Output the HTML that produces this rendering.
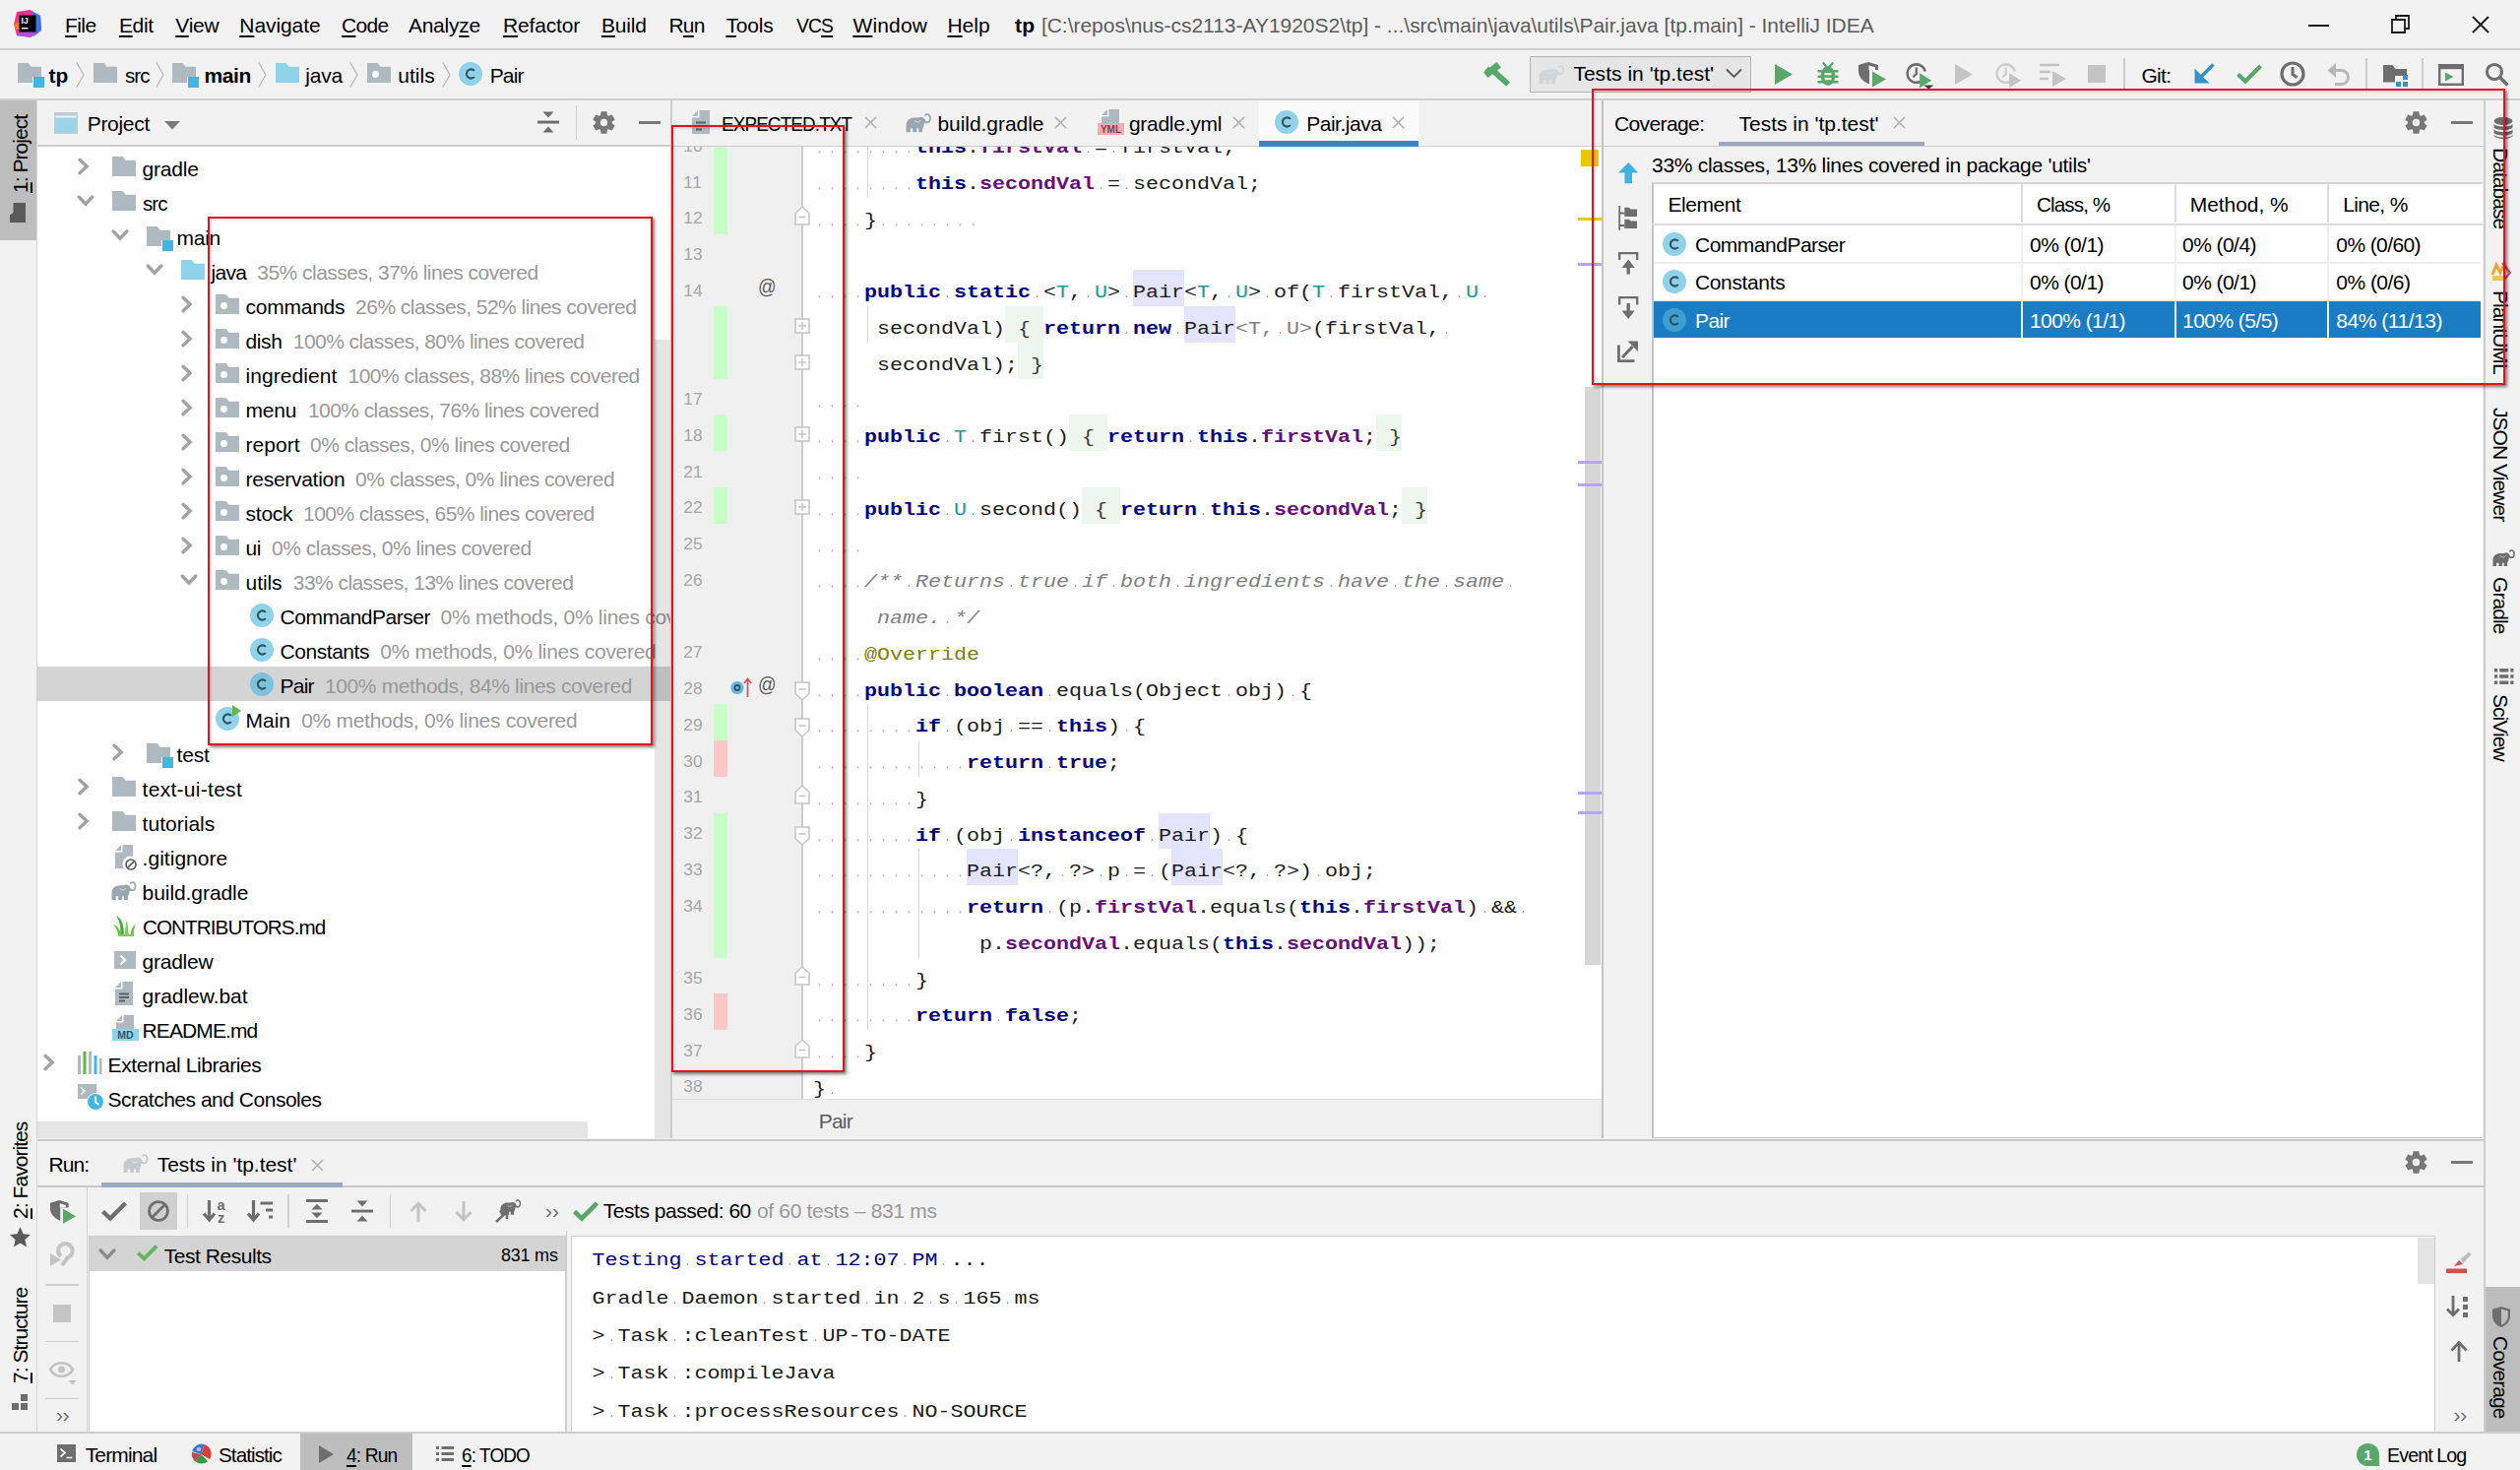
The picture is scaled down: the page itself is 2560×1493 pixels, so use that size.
<!DOCTYPE html>
<html lang="en"><head><meta charset="utf-8"><title>IntelliJ IDEA - Pair.java</title>
<style>

html,body{margin:0;padding:0}
body{width:2560px;height:1493px;position:relative;overflow:hidden;background:#f2f2f2;
 font-family:'Liberation Sans',sans-serif;font-size:20.5px;color:#000}
div,span.t,svg{position:absolute}
svg{overflow:visible}
span.t{white-space:pre}
u{text-decoration:underline;text-decoration-thickness:1.5px;text-underline-offset:2.5px}
.clip{overflow:hidden}
.code{position:absolute;white-space:pre;font-family:'Liberation Mono',monospace;font-size:21.67px;line-height:55px;height:55px;color:#1c1c1c;letter-spacing:0;transform:scaleY(.84);transform-origin:0 0}
.code b{font-weight:700}
.k{color:#000080;font-weight:700}
.f{color:#660e7a;font-weight:700}
.tp{color:#20999d}
.an{color:#808000}
.cm{color:#808080;font-style:italic}
.gy{color:#808080}
.br{color:#3c3c3c}
.w{background:radial-gradient(ellipse 1.25px 1.5px at 6.5px 17.4px,#a3a3a3 0,#a3a3a3 50%,rgba(163,163,163,0) 100%) 0 0/13.002px 100% repeat-x}
.red{border:2px solid #e8111f;box-sizing:border-box;box-shadow:2px 2px 3px rgba(0,0,0,.5),inset 2px 2px 2px rgba(0,0,0,.1)}

</style></head>
<body>
<div style="left:0px;top:49px;width:2560px;height:2px;background:#cfcfcf;"></div>
<svg style="left:14px;top:10px;" width="28" height="28" viewBox="0 0 28 28"><path d="M3 2L16 0L27 6L28 21L17 28L3 26L0 15Z" fill="#fc318c"/><path d="M16 0L27 6L28 21L20 27L22 8Z" fill="#3d6ff2"/><path d="M0 15L5 12L6 20L2 20Z" fill="#fc801d"/><path d="M3 26L17 28L24 22L8 19Z" fill="#b34fd8"/><rect x="5.5" y="5.5" width="17" height="17" fill="#000"/><rect x="8" y="18" width="6.5" height="1.4" fill="#fff"/><text x="7.6" y="14.2" font-family="Liberation Sans,sans-serif" font-size="8.5" font-weight="700" fill="#fff">IJ</text></svg>
<span class="t" style="left:66px;top:11.72px;line-height:27px;color:#000;font-family:'Liberation Sans',sans-serif;font-size:21px;letter-spacing:-0.586px;"><u>F</u>ile</span>
<span class="t" style="left:120.9px;top:11.72px;line-height:27px;color:#000;font-family:'Liberation Sans',sans-serif;font-size:21px;letter-spacing:-0.301px;"><u>E</u>dit</span>
<span class="t" style="left:178.3px;top:11.72px;line-height:27px;color:#000;font-family:'Liberation Sans',sans-serif;font-size:21px;letter-spacing:-0.264px;"><u>V</u>iew</span>
<span class="t" style="left:243.3px;top:11.72px;line-height:27px;color:#000;font-family:'Liberation Sans',sans-serif;font-size:21px;letter-spacing:-0.086px;"><u>N</u>avigate</span>
<span class="t" style="left:346.9px;top:11.72px;line-height:27px;color:#000;font-family:'Liberation Sans',sans-serif;font-size:21px;letter-spacing:-0.630px;"><u>C</u>ode</span>
<span class="t" style="left:414.9px;top:11.72px;line-height:27px;color:#000;font-family:'Liberation Sans',sans-serif;font-size:21px;letter-spacing:-0.231px;">Analy<u>z</u>e</span>
<span class="t" style="left:510.9px;top:11.72px;line-height:27px;color:#000;font-family:'Liberation Sans',sans-serif;font-size:21px;letter-spacing:-0.147px;"><u>R</u>efactor</span>
<span class="t" style="left:611px;top:11.72px;line-height:27px;color:#000;font-family:'Liberation Sans',sans-serif;font-size:21px;letter-spacing:-0.204px;"><u>B</u>uild</span>
<span class="t" style="left:679.5px;top:11.72px;line-height:27px;color:#000;font-family:'Liberation Sans',sans-serif;font-size:21px;letter-spacing:-0.816px;">R<u>u</u>n</span>
<span class="t" style="left:737.4px;top:11.72px;line-height:27px;color:#000;font-family:'Liberation Sans',sans-serif;font-size:21px;letter-spacing:-0.146px;"><u>T</u>ools</span>
<span class="t" style="left:809px;top:11.72px;line-height:27px;color:#000;font-family:'Liberation Sans',sans-serif;font-size:21px;letter-spacing:-0.945px;transform-origin:0 0;transform:scaleX(0.9190);">VC<u>S</u></span>
<span class="t" style="left:866.4px;top:11.72px;line-height:27px;color:#000;font-family:'Liberation Sans',sans-serif;font-size:21px;letter-spacing:0.166px;"><u>W</u>indow</span>
<span class="t" style="left:962.4px;top:11.72px;line-height:27px;color:#000;font-family:'Liberation Sans',sans-serif;font-size:21px;"><u>H</u>elp</span>
<span class="t" style="left:1031px;top:11.72px;line-height:27px;color:#000;font-family:'Liberation Sans',sans-serif;font-size:21px;font-weight:700;letter-spacing:0.236px;">tp</span>
<span class="t" style="left:1057.9px;top:11.72px;line-height:27px;color:#5c5c5c;font-family:'Liberation Sans',sans-serif;font-size:21px;letter-spacing:-0.021px;">[C:\repos\nus-cs2113-AY1920S2\tp] - ...\src\main\java\utils\Pair.java [tp.main] - IntelliJ IDEA</span>
<div style="left:2345px;top:24.5px;width:21px;height:2px;background:#1a1a1a;"></div>
<svg style="left:2429px;top:15px;" width="19" height="19" viewBox="0 0 19 19"><path d="M1 5H14V18H1Z M5 5V1H18V14H14" fill="none" stroke="#1a1a1a" stroke-width="1.8"/></svg>
<svg style="left:2511px;top:16px;" width="18" height="18" viewBox="0 0 18 18"><path d="M1 1L17 17M17 1L1 17" stroke="#1a1a1a" stroke-width="1.9" fill="none"/></svg>
<div style="left:0px;top:100px;width:2560px;height:2px;background:#cfcfcf;"></div>
<svg style="left:17.8px;top:64.2px;" width="27" height="25" viewBox="0 0 27 25"><path d="M0 0H10.6L13.6 3.7H24V14H15V20H0Z" fill="#afb9c0"/><rect x="16" y="14" width="11" height="11" fill="#40b6e0"/></svg>
<span class="t" style="left:49.5px;top:62.52px;line-height:27px;color:#000;font-family:'Liberation Sans',sans-serif;font-size:21px;font-weight:700;letter-spacing:-0.064px;">tp</span>
<svg style="left:77px;top:63px;" width="9" height="26" viewBox="0 0 9 26"><path d="M0.8 0.5L8 13L0.8 25.5" fill="none" stroke="#b9b9b9" stroke-width="1.3"/></svg>
<svg style="left:94.7px;top:64.2px;" width="24" height="20" viewBox="0 0 24 20"><path d="M0 0H10.6L13.6 3.7H24V20H0Z" fill="#afb9c0"/></svg>
<span class="t" style="left:126.7px;top:62.52px;line-height:27px;color:#000;font-family:'Liberation Sans',sans-serif;font-size:21px;letter-spacing:-0.945px;transform-origin:0 0;transform:scaleX(0.9775);">src</span>
<svg style="left:158px;top:63px;" width="9" height="26" viewBox="0 0 9 26"><path d="M0.8 0.5L8 13L0.8 25.5" fill="none" stroke="#b9b9b9" stroke-width="1.3"/></svg>
<svg style="left:174.7px;top:64.2px;" width="27" height="25" viewBox="0 0 27 25"><path d="M0 0H10.6L13.6 3.7H24V14H15V20H0Z" fill="#afb9c0"/><rect x="16" y="14" width="11" height="11" fill="#40b6e0"/></svg>
<span class="t" style="left:207.5px;top:62.52px;line-height:27px;color:#000;font-family:'Liberation Sans',sans-serif;font-size:21px;font-weight:700;letter-spacing:-0.379px;">main</span>
<svg style="left:262px;top:63px;" width="9" height="26" viewBox="0 0 9 26"><path d="M0.8 0.5L8 13L0.8 25.5" fill="none" stroke="#b9b9b9" stroke-width="1.3"/></svg>
<svg style="left:279.7px;top:64.2px;" width="24" height="20" viewBox="0 0 24 20"><path d="M0 0H10.6L13.6 3.7H24V20H0Z" fill="#8fd3ea"/></svg>
<span class="t" style="left:310.3px;top:62.52px;line-height:27px;color:#000;font-family:'Liberation Sans',sans-serif;font-size:21px;letter-spacing:-0.208px;">java</span>
<svg style="left:355px;top:63px;" width="9" height="26" viewBox="0 0 9 26"><path d="M0.8 0.5L8 13L0.8 25.5" fill="none" stroke="#b9b9b9" stroke-width="1.3"/></svg>
<svg style="left:372.8px;top:64.2px;" width="24" height="20" viewBox="0 0 24 20"><path d="M0 0H10.6L13.6 3.7H24V20H0Z" fill="#afb9c0"/><circle cx="8.5" cy="11.5" r="3.4" fill="#fff"/></svg>
<span class="t" style="left:404.3px;top:62.52px;line-height:27px;color:#000;font-family:'Liberation Sans',sans-serif;font-size:21px;letter-spacing:0.028px;">utils</span>
<svg style="left:449px;top:63px;" width="9" height="26" viewBox="0 0 9 26"><path d="M0.8 0.5L8 13L0.8 25.5" fill="none" stroke="#b9b9b9" stroke-width="1.3"/></svg>
<svg style="left:465.7px;top:63px;" width="24" height="24" viewBox="0 0 24 24"><circle cx="12" cy="12" r="12" fill="#8fd3ea"/><path d="M15.9 8.9A4.6 4.6 0 1 0 15.9 15.1" fill="none" stroke="#36505c" stroke-width="2.1"/></svg>
<span class="t" style="left:497.7px;top:62.52px;line-height:27px;color:#000;font-family:'Liberation Sans',sans-serif;font-size:21px;letter-spacing:-0.840px;">Pair</span>
<svg style="left:1506.5px;top:62.5px;" width="27" height="25" viewBox="0 0 27 25"><g fill="#59a869"><rect x="-8.5" y="-3.6" width="17" height="7.2" transform="translate(9 8) rotate(-38)"/><path d="M0.8 9.5L5 4.5L8 8Z"/><rect x="0" y="-2.9" width="21" height="5.8" transform="translate(9.5 8.5) rotate(42)"/></g></svg>
<div style="left:1554px;top:57px;width:225px;height:37px;background:#e6e6e6;border:1.5px solid #b4b4b4;box-sizing:border-box;"></div>
<svg style="left:1563px;top:65.5px;" width="26.4" height="19.2" viewBox="0 0 24 17.5"><path d="M0.5 17.5V11C0.5 6.5 4 4 8.5 4H12C13.5 3 15.5 3.2 16.8 4.3C18.3 5.6 18.6 7.8 19.8 7.8C21.2 7.8 22 6.3 22 4.6C22 3 21 1.9 19.8 1.9C19.2 1.9 18.7 2.3 18.6 2.8L17.3 2.2C17.7 1 18.8 0.3 20 0.3C22 0.3 23.6 2.2 23.6 4.6C23.6 7.4 22 9.6 19.6 9.6C18.6 9.6 17.8 9.2 17.2 8.6C17.2 11.5 16.4 13.2 15.6 13.8V17.5H12V14.2H10.2V17.5H6.6V14.2H4.3V17.5Z" fill="#d2d6d9"/><path d="M8.2 6.3C9.4 8.6 12.2 8.8 14 6.6" fill="none" stroke="#e6e6e6" stroke-width="0.9" opacity=".75"/></svg>
<span class="t" style="left:1598.4px;top:60.92px;line-height:27px;color:#000;font-family:'Liberation Sans',sans-serif;font-size:21px;letter-spacing:0.025px;">Tests in 'tp.test'</span>
<svg style="left:1753px;top:69px;" width="17" height="11" viewBox="0 0 17 11"><path d="M1 1.5L8.5 9L16 1.5" fill="none" stroke="#555" stroke-width="1.8"/></svg>
<svg style="left:1803.0px;top:64.7px;" width="18" height="21" viewBox="0 0 18 21"><path d="M0 0L18 10.5L0 21Z" fill="#59a869"/></svg>
<svg style="left:1846.0px;top:62.9px;" width="22" height="24" viewBox="0 0 22 24"><path d="M5.8 0.6L9.6 5M16.2 0.6L12.4 5" stroke="#59a869" stroke-width="2.3" fill="none"/><ellipse cx="11" cy="14" rx="7.3" ry="10" fill="#59a869"/><path d="M0.5 9.2H21.5M0.5 14.7H21.5M0.5 20.2H21.5" stroke="#59a869" stroke-width="2.4" fill="none"/><rect x="7.6" y="11" width="6.8" height="2.3" fill="#f2f2f2"/><rect x="7.6" y="15.9" width="6.8" height="2.3" fill="#f2f2f2"/></svg>
<svg style="left:1888px;top:62.5px;" width="28" height="26" viewBox="0 0 28 26"><path d="M0 3L10 0L20 3V8H11V22.5C4 19.5 0 15 0 9Z" fill="#6e6e6e"/><path d="M10 3.2V20C6 17.5 3 14 3 9V5.2Z" fill="#f2f2f2" opacity="0"/><path d="M10.5 3.5L17 5.3V8H10.5Z" fill="#f2f2f2"/><path d="M14 9.5L28 17.5L14 25.5Z" fill="#59a869"/></svg>
<svg style="left:1934.5px;top:61.5px;" width="31" height="30" viewBox="0 0 31 30"><path d="M15.5 21A9.2 9.2 0 1 1 20.7 10.5" fill="none" stroke="#6e6e6e" stroke-width="2.5"/><path d="M11.8 6.5V13L8.3 16.3" fill="none" stroke="#6e6e6e" stroke-width="2.3"/><path d="M15.1 12.3L27.2 19.7L15.1 27.2Z" fill="#59a869"/><path d="M19.3 24.4H29.3L24.3 28.6Z" fill="#3c3c3c"/></svg>
<svg style="left:1986.0px;top:64.7px;" width="18" height="21" viewBox="0 0 18 21"><path d="M0 0L18 10.5L0 21Z" fill="#c4c4c4"/></svg>
<svg style="left:2026px;top:61.5px;" width="31" height="30" viewBox="0 0 31 30"><path d="M15.5 21A9.2 9.2 0 1 1 20.7 10.5" fill="none" stroke="#cdcdcd" stroke-width="2.5"/><path d="M11.8 6.5V13L8.3 16.3" fill="none" stroke="#cdcdcd" stroke-width="2.3"/><path d="M15.1 12.3L27.2 19.7L15.1 27.2Z" fill="#c4c4c4"/></svg>
<svg style="left:2072px;top:64px;" width="27" height="24" viewBox="0 0 27 24"><path d="M0 2H20M0 9H11M0 16H9" stroke="#c4c4c4" stroke-width="2.6"/><path d="M13 8L27 16L13 24Z" fill="#c4c4c4"/></svg>
<svg style="left:2121.0px;top:66.0px;" width="18" height="18" viewBox="0 0 18 18"><rect width="18" height="18" fill="#c4c4c4"/></svg>
<div style="left:2157px;top:59px;width:1.5px;height:33px;background:#cdcdcd;"></div>
<span class="t" style="left:2175.4px;top:62.52px;line-height:27px;color:#000;font-family:'Liberation Sans',sans-serif;font-size:21px;letter-spacing:-0.693px;">Git:</span>
<svg style="left:2227.5px;top:63.5px;" width="22" height="22" viewBox="0 0 22 22"><path d="M20.5 1.5L7 15" fill="none" stroke="#3592c4" stroke-width="3.4"/><path d="M1.5 5.5V20.5H16.5Z" fill="#3592c4"/></svg>
<svg style="left:2271.5px;top:64.5px;" width="26" height="20" viewBox="0 0 26 20"><path d="M1.5 10.5L9 17.5L24.5 2" fill="none" stroke="#59a869" stroke-width="4.2"/></svg>
<svg style="left:2315.7px;top:62.0px;" width="26" height="26" viewBox="0 0 26 26"><circle cx="13" cy="13" r="11" fill="none" stroke="#6e6e6e" stroke-width="3.2"/><path d="M13 6V13.5L17.5 16.8" fill="none" stroke="#6e6e6e" stroke-width="3"/></svg>
<svg style="left:2364.0px;top:62.5px;" width="23" height="24" viewBox="0 0 23 24"><path d="M7 8.5H14.5A7 7 0 0 1 14.5 22.5H8" fill="none" stroke="#b8b8b8" stroke-width="3"/><path d="M9 1V16L0.5 8.5Z" fill="#b8b8b8"/></svg>
<div style="left:2403px;top:59px;width:1.5px;height:33px;background:#cdcdcd;"></div>
<svg style="left:2420.5px;top:65.5px;" width="26" height="23" viewBox="0 0 26 23"><path d="M0 0H9.5L12.5 4H24V11H12V17.5H0Z" fill="#6e6e6e"/><rect x="20" y="10" width="5" height="5" fill="#3592c4"/><rect x="13" y="17" width="5" height="5" fill="#3592c4"/><rect x="20" y="17" width="5" height="5" fill="#3592c4"/></svg>
<div style="left:2460px;top:59px;width:1.5px;height:33px;background:#cdcdcd;"></div>
<svg style="left:2476.5px;top:64.5px;" width="26" height="22" viewBox="0 0 26 22"><rect x="1.2" y="1.2" width="23.6" height="19.6" fill="none" stroke="#6e6e6e" stroke-width="2.4"/><rect x="1.2" y="1.2" width="23.6" height="4" fill="#6e6e6e"/><path d="M7 8.5L15.5 13L7 17.5Z" fill="#59a869"/></svg>
<svg style="left:2524.0px;top:63.0px;" width="25" height="25" viewBox="0 0 25 25"><circle cx="10" cy="10" r="7.6" fill="none" stroke="#6e6e6e" stroke-width="3"/><path d="M15.5 15.5L23.5 23.5" stroke="#6e6e6e" stroke-width="3.6"/></svg>
<div style="left:1629px;top:102px;width:894px;height:1054px;background:#f2f2f2;"></div>
<div style="left:1629px;top:147.5px;width:894px;height:1.5px;background:#cdcdcd;"></div>
<span class="t" style="left:1640px;top:111.52px;line-height:27px;color:#000;font-family:'Liberation Sans',sans-serif;font-size:21px;letter-spacing:-0.610px;">Coverage:</span>
<span class="t" style="left:1766.5px;top:111.52px;line-height:27px;color:#000;font-family:'Liberation Sans',sans-serif;font-size:21px;letter-spacing:-0.008px;">Tests in 'tp.test'</span>
<svg style="left:1922.5px;top:118.0px;" width="13" height="13" viewBox="0 0 13 13"><path d="M1 1L12 12M12 1L1 12" stroke="#b0b0b0" stroke-width="1.6" fill="none"/></svg>
<div style="left:1745.5px;top:144.3px;width:209.5px;height:4px;background:#9ca8c1;"></div>
<svg style="left:2443.3px;top:112.8px;" width="23" height="23" viewBox="0 0 23 23"><path d="M8.6 0.3H14.4L15.3 6H7.7Z" transform="rotate(0 11.5 11.5)" fill="#787878"/><path d="M8.6 0.3H14.4L15.3 6H7.7Z" transform="rotate(60 11.5 11.5)" fill="#787878"/><path d="M8.6 0.3H14.4L15.3 6H7.7Z" transform="rotate(120 11.5 11.5)" fill="#787878"/><path d="M8.6 0.3H14.4L15.3 6H7.7Z" transform="rotate(180 11.5 11.5)" fill="#787878"/><path d="M8.6 0.3H14.4L15.3 6H7.7Z" transform="rotate(240 11.5 11.5)" fill="#787878"/><path d="M8.6 0.3H14.4L15.3 6H7.7Z" transform="rotate(300 11.5 11.5)" fill="#787878"/><circle cx="11.5" cy="11.5" r="6" fill="none" stroke="#787878" stroke-width="4.6"/></svg>
<svg style="left:2490.0px;top:123.0px;" width="22" height="3" viewBox="0 0 22 3"><rect width="22" height="3" fill="#787878"/></svg>
<span class="t" style="left:1678px;top:153.52px;line-height:27px;color:#000;font-family:'Liberation Sans',sans-serif;font-size:21px;letter-spacing:-0.285px;">33% classes, 13% lines covered in package 'utils'</span>
<svg style="left:1643.8px;top:164.5px;" width="20.4" height="21.2" viewBox="0 0 20.4 21.2"><path d="M10.2 0L20.4 10.6H14V21.2H6.4V10.6H0Z" fill="#3fb4e0"/></svg>
<svg style="left:1643.5px;top:208.5px;" width="20" height="25" viewBox="0 0 20 25"><path d="M1.2 0V24.8M1.2 7.5H6.5M1.2 20H6.5" fill="none" stroke="#6e6e6e" stroke-width="1.8"/><path d="M6.3 1.8H11L12.5 3.6H19V11H6.3Z" fill="#6e6e6e"/><path d="M6.3 13.8H11L12.5 15.6H19V23H6.3Z" fill="#6e6e6e"/></svg>
<svg style="left:1643.8px;top:255.5px;" width="20.4" height="23" viewBox="0 0 20.4 23"><path d="M1.2 8V1.2H19.2V8" fill="none" stroke="#6e6e6e" stroke-width="2.3"/><path d="M10.2 22.5V14" fill="none" stroke="#6e6e6e" stroke-width="3.4"/><path d="M3.6 16L10.2 7.5L16.8 16Z" fill="#6e6e6e"/></svg>
<svg style="left:1643.8px;top:301px;" width="20.4" height="23.5" viewBox="0 0 20.4 23.5"><path d="M1.2 8.5V1.2H19.2V8.5" fill="none" stroke="#6e6e6e" stroke-width="2.3"/><path d="M10.2 7V16" fill="none" stroke="#6e6e6e" stroke-width="3.4"/><path d="M3.6 14.5L10.2 23L16.8 14.5Z" fill="#6e6e6e"/></svg>
<svg style="left:1643.3px;top:346px;" width="21" height="22" viewBox="0 0 21 22"><path d="M1.4 4.5V20.6H17.5" fill="none" stroke="#6e6e6e" stroke-width="2.8"/><path d="M5 17L15.5 6" fill="none" stroke="#6e6e6e" stroke-width="3.2"/><path d="M10.5 0.5H21V11Z" fill="#6e6e6e"/></svg>
<div style="left:1678px;top:185px;width:844px;height:970px;background:#fff;"></div>
<div style="left:1678px;top:1155px;width:844px;height:1.2px;background:#c4c4c4;"></div>
<div style="left:1678px;top:185px;width:1.8px;height:971px;background:#c4c4c4;"></div>
<div style="left:1678px;top:185px;width:844px;height:1.5px;background:#d4d4d4;"></div>
<div style="left:1678px;top:227px;width:844px;height:2px;background:#dadada;"></div>
<div style="left:2053px;top:187px;width:2px;height:39px;background:#dcdcdc;"></div>
<div style="left:2053px;top:229px;width:2px;height:114px;background:#efefef;"></div>
<div style="left:2209px;top:187px;width:2px;height:39px;background:#dcdcdc;"></div>
<div style="left:2209px;top:229px;width:2px;height:114px;background:#efefef;"></div>
<div style="left:2364px;top:187px;width:2px;height:39px;background:#dcdcdc;"></div>
<div style="left:2364px;top:229px;width:2px;height:114px;background:#efefef;"></div>
<div style="left:1680px;top:266px;width:840px;height:1.5px;background:#efefef;"></div>
<div style="left:1680px;top:304.5px;width:840px;height:1.5px;background:#efefef;"></div>
<span class="t" style="left:1694.5px;top:194.02px;line-height:27px;color:#000;font-family:'Liberation Sans',sans-serif;font-size:21px;letter-spacing:-0.450px;">Element</span>
<span class="t" style="left:2069.3px;top:194.02px;line-height:27px;color:#000;font-family:'Liberation Sans',sans-serif;font-size:21px;letter-spacing:-0.945px;transform-origin:0 0;transform:scaleX(0.9867);">Class, %</span>
<span class="t" style="left:2224.8px;top:194.02px;line-height:27px;color:#000;font-family:'Liberation Sans',sans-serif;font-size:21px;letter-spacing:-0.066px;">Method, %</span>
<span class="t" style="left:2380.2px;top:194.02px;line-height:27px;color:#000;font-family:'Liberation Sans',sans-serif;font-size:21px;letter-spacing:-0.650px;">Line, %</span>
<div style="left:1679.8px;top:306px;width:373.20000000000005px;height:36.5px;background:#1a7dc4;"></div>
<div style="left:2055px;top:306px;width:154px;height:36.5px;background:#1a7dc4;"></div>
<div style="left:2211px;top:306px;width:153px;height:36.5px;background:#1a7dc4;"></div>
<div style="left:2366px;top:306px;width:154px;height:36.5px;background:#1a7dc4;"></div>
<svg style="left:1688.8px;top:236.0px;" width="24" height="24" viewBox="0 0 24 24"><circle cx="12" cy="12" r="12" fill="#8fd3ea"/><path d="M15.9 8.9A4.6 4.6 0 1 0 15.9 15.1" fill="none" stroke="#36505c" stroke-width="2.1"/></svg>
<span class="t" style="left:1722px;top:234.82px;line-height:27px;color:#000;font-family:'Liberation Sans',sans-serif;font-size:21px;letter-spacing:-0.495px;">CommandParser</span>
<span class="t" style="left:2062px;top:234.82px;line-height:27px;color:#000;font-family:'Liberation Sans',sans-serif;font-size:21px;letter-spacing:-0.547px;">0% (0/1)</span>
<span class="t" style="left:2217px;top:234.82px;line-height:27px;color:#000;font-family:'Liberation Sans',sans-serif;font-size:21px;letter-spacing:-0.547px;">0% (0/4)</span>
<span class="t" style="left:2373.3px;top:234.82px;line-height:27px;color:#000;font-family:'Liberation Sans',sans-serif;font-size:21px;letter-spacing:-0.594px;">0% (0/60)</span>
<svg style="left:1688.8px;top:274.2px;" width="24" height="24" viewBox="0 0 24 24"><circle cx="12" cy="12" r="12" fill="#8fd3ea"/><path d="M15.9 8.9A4.6 4.6 0 1 0 15.9 15.1" fill="none" stroke="#36505c" stroke-width="2.1"/></svg>
<span class="t" style="left:1722px;top:273.02px;line-height:27px;color:#000;font-family:'Liberation Sans',sans-serif;font-size:21px;letter-spacing:-0.363px;">Constants</span>
<span class="t" style="left:2062px;top:273.02px;line-height:27px;color:#000;font-family:'Liberation Sans',sans-serif;font-size:21px;letter-spacing:-0.547px;">0% (0/1)</span>
<span class="t" style="left:2217px;top:273.02px;line-height:27px;color:#000;font-family:'Liberation Sans',sans-serif;font-size:21px;letter-spacing:-0.547px;">0% (0/1)</span>
<span class="t" style="left:2373.3px;top:273.02px;line-height:27px;color:#000;font-family:'Liberation Sans',sans-serif;font-size:21px;letter-spacing:-0.534px;">0% (0/6)</span>
<svg style="left:1688.8px;top:312.79999999999995px;" width="24" height="24" viewBox="0 0 24 24"><circle cx="12" cy="12" r="12" fill="#3f9fd2"/><path d="M15.9 8.9A4.6 4.6 0 1 0 15.9 15.1" fill="none" stroke="#36505c" stroke-width="2.1"/></svg>
<span class="t" style="left:1722px;top:311.62px;line-height:27px;color:#fff;font-family:'Liberation Sans',sans-serif;font-size:21px;letter-spacing:-0.590px;">Pair</span>
<span class="t" style="left:2062px;top:311.62px;line-height:27px;color:#fff;font-family:'Liberation Sans',sans-serif;font-size:21px;letter-spacing:-0.573px;">100% (1/1)</span>
<span class="t" style="left:2217px;top:311.62px;line-height:27px;color:#fff;font-family:'Liberation Sans',sans-serif;font-size:21px;letter-spacing:-0.543px;">100% (5/5)</span>
<span class="t" style="left:2373.3px;top:311.62px;line-height:27px;color:#fff;font-family:'Liberation Sans',sans-serif;font-size:21px;letter-spacing:-0.469px;">84% (11/13)</span>
<div style="left:38px;top:102px;width:644px;height:46px;background:#f2f2f2;"></div>
<div style="left:38px;top:147px;width:644px;height:2px;background:#cdcdcd;"></div>
<svg style="left:55px;top:113.5px;" width="24" height="22" viewBox="0 0 24 22"><rect x="0.75" y="0.75" width="22.5" height="20.5" fill="#9ad5ea" stroke="#c3ccd2" stroke-width="1.5"/><rect x="0" y="0" width="24" height="3.5" fill="#c3ccd2"/><rect x="1.5" y="3.5" width="21" height="2" fill="#f2f2f2"/></svg>
<span class="t" style="left:88.7px;top:111.52px;line-height:27px;color:#000;font-family:'Liberation Sans',sans-serif;font-size:21px;letter-spacing:-0.294px;">Project</span>
<svg style="left:167px;top:123px;" width="16" height="8.5" viewBox="0 0 16 8.5"><path d="M0 0H16L8 8.5Z" fill="#7a7a7a"/></svg>
<svg style="left:545.7px;top:113.3px;" width="22" height="22" viewBox="0 0 22 22"><rect x="0" y="9.6" width="22" height="2.9" fill="#6e6e6e"/><path d="M5.5 0.5H16.5L11 6.5Z" fill="#6e6e6e"/><path d="M5.5 21.5H16.5L11 15.5Z" fill="#6e6e6e"/></svg>
<div style="left:584.5px;top:107px;width:1.5px;height:35px;background:#d0d0d0;"></div>
<svg style="left:602.3px;top:112.8px;" width="23" height="23" viewBox="0 0 23 23"><path d="M8.6 0.3H14.4L15.3 6H7.7Z" transform="rotate(0 11.5 11.5)" fill="#787878"/><path d="M8.6 0.3H14.4L15.3 6H7.7Z" transform="rotate(60 11.5 11.5)" fill="#787878"/><path d="M8.6 0.3H14.4L15.3 6H7.7Z" transform="rotate(120 11.5 11.5)" fill="#787878"/><path d="M8.6 0.3H14.4L15.3 6H7.7Z" transform="rotate(180 11.5 11.5)" fill="#787878"/><path d="M8.6 0.3H14.4L15.3 6H7.7Z" transform="rotate(240 11.5 11.5)" fill="#787878"/><path d="M8.6 0.3H14.4L15.3 6H7.7Z" transform="rotate(300 11.5 11.5)" fill="#787878"/><circle cx="11.5" cy="11.5" r="6" fill="none" stroke="#787878" stroke-width="4.6"/></svg>
<svg style="left:649.0px;top:123.0px;" width="22" height="3" viewBox="0 0 22 3"><rect width="22" height="3" fill="#787878"/></svg>
<div style="left:38px;top:149px;width:644px;height:1007px;background:#fff;"></div>
<div class="clip" style="left:38px;top:149px;width:643.5px;height:1007px">
<svg style="left:41.1px;top:11.0px;" width="12" height="18" viewBox="0 0 12 18"><path d="M2 2.2L9.2 9L2 15.8" fill="none" stroke="#a3a3a3" stroke-width="3.4" stroke-linecap="round" stroke-linejoin="miter"/></svg>
<svg style="left:76.0px;top:10px;" width="24" height="20" viewBox="0 0 24 20"><path d="M0 0H10.6L13.6 3.7H24V20H0Z" fill="#afb9c0"/></svg>
<span class="t" style="left:106.6px;top:8.92px;line-height:27px;color:#000;font-family:'Liberation Sans',sans-serif;font-size:21px;letter-spacing:-0.232px;">gradle</span>
<svg style="left:40.1px;top:49.2px;" width="18" height="12" viewBox="0 0 18 12"><path d="M2.2 2L9 9.2L15.8 2" fill="none" stroke="#a3a3a3" stroke-width="3.4" stroke-linecap="round" stroke-linejoin="miter"/></svg>
<svg style="left:76.0px;top:45px;" width="24" height="20" viewBox="0 0 24 20"><path d="M0 0H10.6L13.6 3.7H24V20H0Z" fill="#afb9c0"/></svg>
<span class="t" style="left:106.6px;top:43.92px;line-height:27px;color:#000;font-family:'Liberation Sans',sans-serif;font-size:21px;letter-spacing:-0.945px;transform-origin:0 0;transform:scaleX(0.9775);">src</span>
<svg style="left:75.1px;top:84.2px;" width="18" height="12" viewBox="0 0 18 12"><path d="M2.2 2L9 9.2L15.8 2" fill="none" stroke="#a3a3a3" stroke-width="3.4" stroke-linecap="round" stroke-linejoin="miter"/></svg>
<svg style="left:110.8px;top:80.5px;" width="27" height="25" viewBox="0 0 27 25"><path d="M0 0H10.6L13.6 3.7H24V14H15V20H0Z" fill="#afb9c0"/><rect x="16" y="14" width="11" height="11" fill="#40b6e0"/></svg>
<span class="t" style="left:141.6px;top:78.92px;line-height:27px;color:#000;font-family:'Liberation Sans',sans-serif;font-size:21px;letter-spacing:-0.283px;">main</span>
<svg style="left:110.1px;top:119.2px;" width="18" height="12" viewBox="0 0 18 12"><path d="M2.2 2L9 9.2L15.8 2" fill="none" stroke="#a3a3a3" stroke-width="3.4" stroke-linecap="round" stroke-linejoin="miter"/></svg>
<svg style="left:146.0px;top:115px;" width="24" height="20" viewBox="0 0 24 20"><path d="M0 0H10.6L13.6 3.7H24V20H0Z" fill="#8fd3ea"/></svg>
<span class="t" style="left:176.6px;top:113.92px;line-height:27px;color:#000;font-family:'Liberation Sans',sans-serif;font-size:21px;letter-spacing:-0.758px;">java</span>
<span class="t" style="left:223.3px;top:113.92px;line-height:27px;color:#999999;font-family:'Liberation Sans',sans-serif;font-size:21px;letter-spacing:-0.529px;">35% classes, 37% lines covered</span>
<svg style="left:146.1px;top:151.0px;" width="12" height="18" viewBox="0 0 12 18"><path d="M2 2.2L9.2 9L2 15.8" fill="none" stroke="#a3a3a3" stroke-width="3.4" stroke-linecap="round" stroke-linejoin="miter"/></svg>
<svg style="left:181.0px;top:150px;" width="24" height="20" viewBox="0 0 24 20"><path d="M0 0H10.6L13.6 3.7H24V20H0Z" fill="#afb9c0"/><circle cx="8.5" cy="11.5" r="3.4" fill="#fff"/></svg>
<span class="t" style="left:211.6px;top:148.92px;line-height:27px;color:#000;font-family:'Liberation Sans',sans-serif;font-size:21px;letter-spacing:-0.250px;">commands</span>
<span class="t" style="left:323.1px;top:148.92px;line-height:27px;color:#999999;font-family:'Liberation Sans',sans-serif;font-size:21px;letter-spacing:-0.529px;">26% classes, 52% lines covered</span>
<svg style="left:146.1px;top:186.0px;" width="12" height="18" viewBox="0 0 12 18"><path d="M2 2.2L9.2 9L2 15.8" fill="none" stroke="#a3a3a3" stroke-width="3.4" stroke-linecap="round" stroke-linejoin="miter"/></svg>
<svg style="left:181.0px;top:185px;" width="24" height="20" viewBox="0 0 24 20"><path d="M0 0H10.6L13.6 3.7H24V20H0Z" fill="#afb9c0"/><circle cx="8.5" cy="11.5" r="3.4" fill="#fff"/></svg>
<span class="t" style="left:211.6px;top:183.92px;line-height:27px;color:#000;font-family:'Liberation Sans',sans-serif;font-size:21px;letter-spacing:-0.433px;">dish</span>
<span class="t" style="left:259.8px;top:183.92px;line-height:27px;color:#999999;font-family:'Liberation Sans',sans-serif;font-size:21px;letter-spacing:-0.556px;">100% classes, 80% lines covered</span>
<svg style="left:146.1px;top:221.0px;" width="12" height="18" viewBox="0 0 12 18"><path d="M2 2.2L9.2 9L2 15.8" fill="none" stroke="#a3a3a3" stroke-width="3.4" stroke-linecap="round" stroke-linejoin="miter"/></svg>
<svg style="left:181.0px;top:220px;" width="24" height="20" viewBox="0 0 24 20"><path d="M0 0H10.6L13.6 3.7H24V20H0Z" fill="#afb9c0"/><circle cx="8.5" cy="11.5" r="3.4" fill="#fff"/></svg>
<span class="t" style="left:211.6px;top:218.92px;line-height:27px;color:#000;font-family:'Liberation Sans',sans-serif;font-size:21px;letter-spacing:0.057px;">ingredient</span>
<span class="t" style="left:315.6px;top:218.92px;line-height:27px;color:#999999;font-family:'Liberation Sans',sans-serif;font-size:21px;letter-spacing:-0.540px;">100% classes, 88% lines covered</span>
<svg style="left:146.1px;top:256.0px;" width="12" height="18" viewBox="0 0 12 18"><path d="M2 2.2L9.2 9L2 15.8" fill="none" stroke="#a3a3a3" stroke-width="3.4" stroke-linecap="round" stroke-linejoin="miter"/></svg>
<svg style="left:181.0px;top:255px;" width="24" height="20" viewBox="0 0 24 20"><path d="M0 0H10.6L13.6 3.7H24V20H0Z" fill="#afb9c0"/><circle cx="8.5" cy="11.5" r="3.4" fill="#fff"/></svg>
<span class="t" style="left:211.6px;top:253.92px;line-height:27px;color:#000;font-family:'Liberation Sans',sans-serif;font-size:21px;letter-spacing:-0.233px;">menu</span>
<span class="t" style="left:274.9px;top:253.92px;line-height:27px;color:#999999;font-family:'Liberation Sans',sans-serif;font-size:21px;letter-spacing:-0.556px;">100% classes, 76% lines covered</span>
<svg style="left:146.1px;top:291.0px;" width="12" height="18" viewBox="0 0 12 18"><path d="M2 2.2L9.2 9L2 15.8" fill="none" stroke="#a3a3a3" stroke-width="3.4" stroke-linecap="round" stroke-linejoin="miter"/></svg>
<svg style="left:181.0px;top:290px;" width="24" height="20" viewBox="0 0 24 20"><path d="M0 0H10.6L13.6 3.7H24V20H0Z" fill="#afb9c0"/><circle cx="8.5" cy="11.5" r="3.4" fill="#fff"/></svg>
<span class="t" style="left:211.6px;top:288.92px;line-height:27px;color:#000;font-family:'Liberation Sans',sans-serif;font-size:21px;letter-spacing:0.007px;">report</span>
<span class="t" style="left:277.1px;top:288.92px;line-height:27px;color:#999999;font-family:'Liberation Sans',sans-serif;font-size:21px;letter-spacing:-0.511px;">0% classes, 0% lines covered</span>
<svg style="left:146.1px;top:326.0px;" width="12" height="18" viewBox="0 0 12 18"><path d="M2 2.2L9.2 9L2 15.8" fill="none" stroke="#a3a3a3" stroke-width="3.4" stroke-linecap="round" stroke-linejoin="miter"/></svg>
<svg style="left:181.0px;top:325px;" width="24" height="20" viewBox="0 0 24 20"><path d="M0 0H10.6L13.6 3.7H24V20H0Z" fill="#afb9c0"/><circle cx="8.5" cy="11.5" r="3.4" fill="#fff"/></svg>
<span class="t" style="left:211.6px;top:323.92px;line-height:27px;color:#000;font-family:'Liberation Sans',sans-serif;font-size:21px;letter-spacing:-0.290px;">reservation</span>
<span class="t" style="left:323.1px;top:323.92px;line-height:27px;color:#999999;font-family:'Liberation Sans',sans-serif;font-size:21px;letter-spacing:-0.529px;">0% classes, 0% lines covered</span>
<svg style="left:146.1px;top:361.0px;" width="12" height="18" viewBox="0 0 12 18"><path d="M2 2.2L9.2 9L2 15.8" fill="none" stroke="#a3a3a3" stroke-width="3.4" stroke-linecap="round" stroke-linejoin="miter"/></svg>
<svg style="left:181.0px;top:360px;" width="24" height="20" viewBox="0 0 24 20"><path d="M0 0H10.6L13.6 3.7H24V20H0Z" fill="#afb9c0"/><circle cx="8.5" cy="11.5" r="3.4" fill="#fff"/></svg>
<span class="t" style="left:211.6px;top:358.92px;line-height:27px;color:#000;font-family:'Liberation Sans',sans-serif;font-size:21px;letter-spacing:-0.263px;">stock</span>
<span class="t" style="left:270.1px;top:358.92px;line-height:27px;color:#999999;font-family:'Liberation Sans',sans-serif;font-size:21px;letter-spacing:-0.556px;">100% classes, 65% lines covered</span>
<svg style="left:146.1px;top:396.0px;" width="12" height="18" viewBox="0 0 12 18"><path d="M2 2.2L9.2 9L2 15.8" fill="none" stroke="#a3a3a3" stroke-width="3.4" stroke-linecap="round" stroke-linejoin="miter"/></svg>
<svg style="left:181.0px;top:395px;" width="24" height="20" viewBox="0 0 24 20"><path d="M0 0H10.6L13.6 3.7H24V20H0Z" fill="#afb9c0"/><circle cx="8.5" cy="11.5" r="3.4" fill="#fff"/></svg>
<span class="t" style="left:211.6px;top:393.92px;line-height:27px;color:#000;font-family:'Liberation Sans',sans-serif;font-size:21px;letter-spacing:-0.530px;">ui</span>
<span class="t" style="left:238.10000000000002px;top:393.92px;line-height:27px;color:#999999;font-family:'Liberation Sans',sans-serif;font-size:21px;letter-spacing:-0.511px;">0% classes, 0% lines covered</span>
<svg style="left:145.1px;top:434.2px;" width="18" height="12" viewBox="0 0 18 12"><path d="M2.2 2L9 9.2L15.8 2" fill="none" stroke="#a3a3a3" stroke-width="3.4" stroke-linecap="round" stroke-linejoin="miter"/></svg>
<svg style="left:181.0px;top:430px;" width="24" height="20" viewBox="0 0 24 20"><path d="M0 0H10.6L13.6 3.7H24V20H0Z" fill="#afb9c0"/><circle cx="8.5" cy="11.5" r="3.4" fill="#fff"/></svg>
<span class="t" style="left:211.6px;top:428.92px;line-height:27px;color:#000;font-family:'Liberation Sans',sans-serif;font-size:21px;letter-spacing:-0.112px;">utils</span>
<span class="t" style="left:259.8px;top:428.92px;line-height:27px;color:#999999;font-family:'Liberation Sans',sans-serif;font-size:21px;letter-spacing:-0.556px;">33% classes, 13% lines covered</span>
<svg style="left:216.00000000000003px;top:463.8px;" width="24" height="24" viewBox="0 0 24 24"><circle cx="12" cy="12" r="12" fill="#8fd3ea"/><path d="M15.9 8.9A4.6 4.6 0 1 0 15.9 15.1" fill="none" stroke="#36505c" stroke-width="2.1"/></svg>
<span class="t" style="left:246.60000000000002px;top:463.92px;line-height:27px;color:#000;font-family:'Liberation Sans',sans-serif;font-size:21px;letter-spacing:-0.487px;">CommandParser</span>
<span class="t" style="left:409.6px;top:463.92px;line-height:27px;color:#999999;font-family:'Liberation Sans',sans-serif;font-size:21px;letter-spacing:-0.287px;">0% methods, 0% lines covered</span>
<svg style="left:216.00000000000003px;top:498.8px;" width="24" height="24" viewBox="0 0 24 24"><circle cx="12" cy="12" r="12" fill="#8fd3ea"/><path d="M15.9 8.9A4.6 4.6 0 1 0 15.9 15.1" fill="none" stroke="#36505c" stroke-width="2.1"/></svg>
<span class="t" style="left:246.60000000000002px;top:498.92px;line-height:27px;color:#000;font-family:'Liberation Sans',sans-serif;font-size:21px;letter-spacing:-0.463px;">Constants</span>
<span class="t" style="left:348.2px;top:498.92px;line-height:27px;color:#999999;font-family:'Liberation Sans',sans-serif;font-size:21px;letter-spacing:-0.287px;">0% methods, 0% lines covered</span>
<div style="left:0px;top:528px;width:644px;height:35px;background:#d4d4d4;"></div>
<svg style="left:216.00000000000003px;top:533.8px;" width="24" height="24" viewBox="0 0 24 24"><circle cx="12" cy="12" r="12" fill="#7cc2db"/><path d="M15.9 8.9A4.6 4.6 0 1 0 15.9 15.1" fill="none" stroke="#36505c" stroke-width="2.1"/></svg>
<span class="t" style="left:246.60000000000002px;top:533.92px;line-height:27px;color:#000;font-family:'Liberation Sans',sans-serif;font-size:21px;letter-spacing:-0.815px;">Pair</span>
<span class="t" style="left:291.9px;top:533.92px;line-height:27px;color:#999999;font-family:'Liberation Sans',sans-serif;font-size:21px;letter-spacing:-0.357px;">100% methods, 84% lines covered</span>
<svg style="left:181.0px;top:568.8px;" width="27" height="26" viewBox="0 0 27 26"><circle cx="12" cy="12" r="12" fill="#8fd3ea"/><path d="M15.9 8.9A4.6 4.6 0 1 0 15.9 15.1" fill="none" stroke="#36505c" stroke-width="2.1"/><path d="M17 -2V10L26 4Z" fill="#62b543" stroke="#fff" stroke-width="0"/></svg>
<span class="t" style="left:211.6px;top:568.92px;line-height:27px;color:#000;font-family:'Liberation Sans',sans-serif;font-size:21px;letter-spacing:-0.033px;">Main</span>
<span class="t" style="left:268.2px;top:568.92px;line-height:27px;color:#999999;font-family:'Liberation Sans',sans-serif;font-size:21px;letter-spacing:-0.290px;">0% methods, 0% lines covered</span>
<svg style="left:76.1px;top:606.0px;" width="12" height="18" viewBox="0 0 12 18"><path d="M2 2.2L9.2 9L2 15.8" fill="none" stroke="#a3a3a3" stroke-width="3.4" stroke-linecap="round" stroke-linejoin="miter"/></svg>
<svg style="left:110.8px;top:605.5px;" width="27" height="25" viewBox="0 0 27 25"><path d="M0 0H10.6L13.6 3.7H24V14H15V20H0Z" fill="#afb9c0"/><rect x="16" y="14" width="11" height="11" fill="#40b6e0"/></svg>
<span class="t" style="left:141.6px;top:603.92px;line-height:27px;color:#000;font-family:'Liberation Sans',sans-serif;font-size:21px;letter-spacing:-0.165px;">test</span>
<svg style="left:41.1px;top:641.0px;" width="12" height="18" viewBox="0 0 12 18"><path d="M2 2.2L9.2 9L2 15.8" fill="none" stroke="#a3a3a3" stroke-width="3.4" stroke-linecap="round" stroke-linejoin="miter"/></svg>
<svg style="left:76.0px;top:640px;" width="24" height="20" viewBox="0 0 24 20"><path d="M0 0H10.6L13.6 3.7H24V20H0Z" fill="#afb9c0"/></svg>
<span class="t" style="left:106.6px;top:638.92px;line-height:27px;color:#000;font-family:'Liberation Sans',sans-serif;font-size:21px;letter-spacing:0.281px;">text-ui-test</span>
<svg style="left:41.1px;top:676.0px;" width="12" height="18" viewBox="0 0 12 18"><path d="M2 2.2L9.2 9L2 15.8" fill="none" stroke="#a3a3a3" stroke-width="3.4" stroke-linecap="round" stroke-linejoin="miter"/></svg>
<svg style="left:76.0px;top:675px;" width="24" height="20" viewBox="0 0 24 20"><path d="M0 0H10.6L13.6 3.7H24V20H0Z" fill="#afb9c0"/></svg>
<span class="t" style="left:106.6px;top:673.92px;line-height:27px;color:#000;font-family:'Liberation Sans',sans-serif;font-size:21px;letter-spacing:0.019px;">tutorials</span>
<svg style="left:79.0px;top:708.5px;" width="22" height="26" viewBox="0 0 22 26"><path d="M7.5 0H18V12A8 8 0 0 0 9 24H0V7.5H7.5Z" fill="#afb9c0"/><path d="M6 0V6H0Z" fill="#afb9c0"/><circle cx="16" cy="20" r="5" fill="#fff" stroke="#5f5f5f" stroke-width="1.7"/><path d="M12.6 23.4L19.4 16.6" stroke="#5f5f5f" stroke-width="1.7"/></svg>
<span class="t" style="left:106.6px;top:708.92px;line-height:27px;color:#000;font-family:'Liberation Sans',sans-serif;font-size:21px;letter-spacing:0.021px;">.gitignore</span>
<svg style="left:75.0px;top:746px;" width="25.9" height="18.9" viewBox="0 0 24 17.5"><path d="M0.5 17.5V11C0.5 6.5 4 4 8.5 4H12C13.5 3 15.5 3.2 16.8 4.3C18.3 5.6 18.6 7.8 19.8 7.8C21.2 7.8 22 6.3 22 4.6C22 3 21 1.9 19.8 1.9C19.2 1.9 18.7 2.3 18.6 2.8L17.3 2.2C17.7 1 18.8 0.3 20 0.3C22 0.3 23.6 2.2 23.6 4.6C23.6 7.4 22 9.6 19.6 9.6C18.6 9.6 17.8 9.2 17.2 8.6C17.2 11.5 16.4 13.2 15.6 13.8V17.5H12V14.2H10.2V17.5H6.6V14.2H4.3V17.5Z" fill="#9aa5ad"/><path d="M8.2 6.3C9.4 8.6 12.2 8.8 14 6.6" fill="none" stroke="#f2f2f2" stroke-width="0.9" opacity=".75"/></svg>
<span class="t" style="left:106.6px;top:743.92px;line-height:27px;color:#000;font-family:'Liberation Sans',sans-serif;font-size:21px;letter-spacing:-0.074px;">build.gradle</span>
<svg style="left:76.5px;top:777.5px;" width="24" height="24" viewBox="0 0 24 24"><path d="M3 3C9 6 11 12 11 24H7C8 16 7 9 3 3Z" fill="#4caf3a"/><path d="M0 12C5 13 7 17 8 24H5C5 19 3 15 0 12Z" fill="#6cc04a"/><path d="M14 8C12 13 12 18 12 24H16C15 18 15 13 14 8Z" fill="#7ed055"/><path d="M23 12C19 14 18 18 17.5 24H21C20.5 19 21 15 23 12Z" fill="#6cc04a"/><path d="M5 24H21V22H5Z" fill="#7ed055"/></svg>
<span class="t" style="left:106.6px;top:778.92px;line-height:27px;color:#000;font-family:'Liberation Sans',sans-serif;font-size:21px;letter-spacing:-0.945px;transform-origin:0 0;transform:scaleX(0.9832);">CONTRIBUTORS.md</span>
<svg style="left:77.5px;top:816.5px;" width="22" height="18" viewBox="0 0 22 18"><rect width="22" height="18" fill="#afb9c0"/><path d="M6.5 4.5L11 9L6.5 13.5" fill="none" stroke="#fff" stroke-width="2.2"/></svg>
<span class="t" style="left:106.6px;top:813.92px;line-height:27px;color:#000;font-family:'Liberation Sans',sans-serif;font-size:21px;letter-spacing:-0.250px;">gradlew</span>
<svg style="left:79.0px;top:848px;" width="18" height="24" viewBox="0 0 18 24"><path d="M7.5 0H18V24H0V7.5H7.5Z" fill="#afb9c0"/><path d="M6 0V6H0Z" fill="#afb9c0"/><path d="M4 12.5H14M4 16H14M4 19.5H10" stroke="#5a6268" stroke-width="1.8"/></svg>
<span class="t" style="left:106.6px;top:848.92px;line-height:27px;color:#000;font-family:'Liberation Sans',sans-serif;font-size:21px;letter-spacing:-0.047px;">gradlew.bat</span>
<svg style="left:76.0px;top:882px;" width="27" height="26" viewBox="0 0 27 26"><path d="M11.5 0H22V14H4V7.5H11.5Z" fill="#afb9c0"/><path d="M10 0V6H4Z" fill="#afb9c0"/><rect x="0" y="14" width="27" height="12" fill="#8fd3ea"/><text x="13.5" y="24" font-family="Liberation Sans,sans-serif" font-size="10.5" font-weight="700" fill="#2f5564" text-anchor="middle">MD</text></svg>
<span class="t" style="left:106.6px;top:883.92px;line-height:27px;color:#000;font-family:'Liberation Sans',sans-serif;font-size:21px;letter-spacing:-0.895px;">README.md</span>
<svg style="left:6.1px;top:921.0px;" width="12" height="18" viewBox="0 0 12 18"><path d="M2 2.2L9.2 9L2 15.8" fill="none" stroke="#a3a3a3" stroke-width="3.4" stroke-linecap="round" stroke-linejoin="miter"/></svg>
<svg style="left:41.0px;top:919px;" width="25" height="23" viewBox="0 0 25 23"><rect x="0" y="4" width="3" height="19" fill="#afb9c0"/><rect x="5.5" y="0" width="3" height="23" fill="#62b543"/><rect x="11" y="0" width="3" height="23" fill="#afb9c0"/><rect x="16.5" y="4" width="3" height="19" fill="#40b6e0"/><rect x="22" y="7" width="2.5" height="16" fill="#afb9c0"/></svg>
<span class="t" style="left:71.6px;top:918.92px;line-height:27px;color:#000;font-family:'Liberation Sans',sans-serif;font-size:21px;letter-spacing:-0.423px;">External Libraries</span>
<svg style="left:41.0px;top:952px;" width="27" height="27" viewBox="0 0 27 27"><rect x="0" y="0" width="19" height="15" fill="#afb9c0"/><path d="M3 3.5L7 7L3 10.5" fill="none" stroke="#fff" stroke-width="1.6"/><circle cx="18" cy="18" r="8.5" fill="#40b6e0" stroke="#fff" stroke-width="1"/><path d="M18 12.5V18.5L21.5 21" fill="none" stroke="#fff" stroke-width="2"/></svg>
<span class="t" style="left:71.6px;top:953.92px;line-height:27px;color:#000;font-family:'Liberation Sans',sans-serif;font-size:21px;letter-spacing:-0.488px;">Scratches and Consoles</span>
</div>
<div style="left:665px;top:345px;width:16.5px;height:811px;background:rgba(0,0,0,.1);"></div>
<div style="left:38px;top:1139px;width:559px;height:17px;background:rgba(0,0,0,.1);"></div>
<div style="left:681px;top:102px;width:1.5px;height:1054px;background:#cdcdcd;"></div>
<div style="left:683px;top:102px;width:945px;height:46px;background:#f2f2f2;"></div>
<div style="left:1279px;top:102px;width:162px;height:46px;background:#fafafa;"></div>
<div style="left:1279px;top:143px;width:162px;height:5.5px;background:#4083c9;"></div>
<div style="left:683px;top:147.5px;width:596px;height:1.5px;background:#cdcdcd;"></div>
<div style="left:1441px;top:147.5px;width:187px;height:1.5px;background:#cdcdcd;"></div>
<svg style="left:703px;top:112px;" width="18" height="24" viewBox="0 0 18 24"><path d="M7.5 0H18V24H0V7.5H7.5Z" fill="#afb9c0"/><path d="M6 0V6H0Z" fill="#afb9c0"/><path d="M4 12.5H14M4 16H14M4 19.5H10" stroke="#5a6268" stroke-width="1.8"/></svg>
<span class="t" style="left:733px;top:111.52px;line-height:27px;color:#000;font-family:'Liberation Sans',sans-serif;font-size:21px;letter-spacing:-0.945px;transform-origin:0 0;transform:scaleX(0.8971);">EXPECTED.TXT</span>
<svg style="left:877.5px;top:117.5px;" width="13" height="13" viewBox="0 0 13 13"><path d="M1 1L12 12M12 1L1 12" stroke="#b0b0b0" stroke-width="1.6" fill="none"/></svg>
<svg style="left:919.6px;top:114.5px;" width="26.4" height="19.2" viewBox="0 0 24 17.5"><path d="M0.5 17.5V11C0.5 6.5 4 4 8.5 4H12C13.5 3 15.5 3.2 16.8 4.3C18.3 5.6 18.6 7.8 19.8 7.8C21.2 7.8 22 6.3 22 4.6C22 3 21 1.9 19.8 1.9C19.2 1.9 18.7 2.3 18.6 2.8L17.3 2.2C17.7 1 18.8 0.3 20 0.3C22 0.3 23.6 2.2 23.6 4.6C23.6 7.4 22 9.6 19.6 9.6C18.6 9.6 17.8 9.2 17.2 8.6C17.2 11.5 16.4 13.2 15.6 13.8V17.5H12V14.2H10.2V17.5H6.6V14.2H4.3V17.5Z" fill="#9aa5ad"/><path d="M8.2 6.3C9.4 8.6 12.2 8.8 14 6.6" fill="none" stroke="#f2f2f2" stroke-width="0.9" opacity=".75"/></svg>
<span class="t" style="left:952.5px;top:111.52px;line-height:27px;color:#000;font-family:'Liberation Sans',sans-serif;font-size:21px;letter-spacing:-0.058px;">build.gradle</span>
<svg style="left:1071.3px;top:117.5px;" width="13" height="13" viewBox="0 0 13 13"><path d="M1 1L12 12M12 1L1 12" stroke="#b0b0b0" stroke-width="1.6" fill="none"/></svg>
<svg style="left:1114.5px;top:111px;" width="27" height="26" viewBox="0 0 27 26"><path d="M11.5 0H22V14H4V7.5H11.5Z" fill="#afb9c0"/><path d="M10 0V6H4Z" fill="#afb9c0"/><rect x="0" y="14" width="27" height="12" fill="#f4a9b5"/><text x="13.5" y="24" font-family="Liberation Sans,sans-serif" font-size="10" font-weight="700" fill="#8c3a4a" text-anchor="middle">YML</text></svg>
<span class="t" style="left:1146.9px;top:111.52px;line-height:27px;color:#000;font-family:'Liberation Sans',sans-serif;font-size:21px;letter-spacing:-0.268px;">gradle.yml</span>
<svg style="left:1251.5px;top:117.5px;" width="13" height="13" viewBox="0 0 13 13"><path d="M1 1L12 12M12 1L1 12" stroke="#b0b0b0" stroke-width="1.6" fill="none"/></svg>
<svg style="left:1294.7px;top:111.5px;" width="24" height="24" viewBox="0 0 24 24"><circle cx="12" cy="12" r="12" fill="#8fd3ea"/><path d="M15.9 8.9A4.6 4.6 0 1 0 15.9 15.1" fill="none" stroke="#36505c" stroke-width="2.1"/></svg>
<span class="t" style="left:1327.2px;top:111.52px;line-height:27px;color:#000;font-family:'Liberation Sans',sans-serif;font-size:21px;letter-spacing:-0.483px;">Pair.java</span>
<svg style="left:1414.1px;top:117.5px;" width="13" height="13" viewBox="0 0 13 13"><path d="M1 1L12 12M12 1L1 12" stroke="#b0b0b0" stroke-width="1.6" fill="none"/></svg>
<div class="clip" style="left:683px;top:149px;width:945px;height:967px;background:#fff">
<div style="left:0px;top:0px;width:132px;height:967px;background:#f0f0f0;"></div>
<div style="left:131px;top:0px;width:2px;height:967px;background:#cbcbcb;"></div>
<div style="left:197.70000000000005px;top:-21.549999999999997px;width:1.5px;height:73.5px;background:#d9d9d9;"></div>
<div style="left:197.70000000000005px;top:162.2px;width:1.5px;height:36.75px;background:#d9d9d9;"></div>
<div style="left:197.70000000000005px;top:566.45px;width:1.5px;height:330.75px;background:#d9d9d9;"></div>
<div style="left:249.70000000000005px;top:603.2px;width:1.5px;height:36.75px;background:#d9d9d9;"></div>
<div style="left:249.70000000000005px;top:713.45px;width:1.5px;height:110.25px;background:#d9d9d9;"></div>
<div style="left:42px;top:-21.549999999999997px;width:14px;height:37.05px;background:#c8ffc8;"></div>
<span class="t" style="left:11.200000000000045px;top:-12.14px;line-height:22px;color:#a6a6a6;font-family:'Liberation Sans',sans-serif;font-size:17.3px;letter-spacing:0.083px;">10</span>
<div class="code" style="left:143.1px;top:-21.55px"><span class="w">        </span><span class="k">this</span>.<span class="f">firstVal</span><span class="w"> </span>=<span class="w"> </span>firstVal;</div>
<div style="left:42px;top:15.199999999999989px;width:14px;height:37.05px;background:#c8ffc8;"></div>
<span class="t" style="left:11.200000000000045px;top:24.61px;line-height:22px;color:#a6a6a6;font-family:'Liberation Sans',sans-serif;font-size:17.3px;letter-spacing:0.723px;">11</span>
<div class="code" style="left:143.1px;top:15.20px"><span class="w">        </span><span class="k">this</span>.<span class="f">secondVal</span><span class="w"> </span>=<span class="w"> </span>secondVal;</div>
<div style="left:42px;top:51.94999999999999px;width:14px;height:37.05px;background:#c8ffc8;"></div>
<span class="t" style="left:11.200000000000045px;top:61.36px;line-height:22px;color:#a6a6a6;font-family:'Liberation Sans',sans-serif;font-size:17.3px;letter-spacing:0.083px;">12</span>
<svg style="left:124.29999999999995px;top:60.44999999999999px;" width="16" height="20" viewBox="0 0 16 20"><path d="M1 19V7.5L8 1L15 7.5V19Z" fill="#fff" stroke="#c6c6c6" stroke-width="1.6"/><path d="M4.5 11.5H11.5" stroke="#c6c6c6" stroke-width="1.6"/></svg>
<div class="code" style="left:143.1px;top:51.95px"><span class="w">    </span>}<span class="w">        </span></div>
<span class="t" style="left:11.200000000000045px;top:98.11px;line-height:22px;color:#a6a6a6;font-family:'Liberation Sans',sans-serif;font-size:17.3px;letter-spacing:0.083px;">13</span>
<span class="t" style="left:11.200000000000045px;top:134.86px;line-height:22px;color:#a6a6a6;font-family:'Liberation Sans',sans-serif;font-size:17.3px;letter-spacing:0.083px;">14</span>
<div style="left:468.2px;top:125.45px;width:52.0px;height:36.75px;background:#e4e4ff;"></div>
<div class="code" style="left:143.1px;top:125.45px"><span class="w">    </span><span class="k">public</span><span class="w"> </span><span class="k">static</span><span class="w"> </span>&lt;<span class="tp">T</span>,<span class="w"> </span><span class="tp">U</span>&gt;<span class="w"> </span>Pair&lt;<span class="tp">T</span>,<span class="w"> </span><span class="tp">U</span>&gt;<span class="w"> </span>of(<span class="tp">T</span><span class="w"> </span>firstVal,<span class="w"> </span><span class="tp">U</span><span class="w"> </span></div>
<div style="left:42px;top:162.2px;width:14px;height:37.05px;background:#c8ffc8;"></div>
<svg style="left:124.29999999999995px;top:174.2px;" width="16" height="16" viewBox="0 0 16 16"><rect x="1" y="1" width="14" height="14" fill="#fff" stroke="#c6c6c6" stroke-width="1.6"/><path d="M4 8H12M8 4V12" stroke="#c6c6c6" stroke-width="1.6"/></svg>
<div style="left:338.1px;top:162.2px;width:39.0px;height:36.75px;background:#edf7ed;"></div>
<div style="left:520.2px;top:162.2px;width:52.0px;height:36.75px;background:#e4e4ff;"></div>
<div class="code" style="left:143.1px;top:162.20px">     secondVal)<span class="br"> { </span><span class="k">return</span><span class="w"> </span><span class="k">new</span><span class="w"> </span>Pair<span class="gy">&lt;T,</span><span class="w"> </span><span class="gy">U&gt;</span>(firstVal,<span class="w"> </span></div>
<div style="left:42px;top:198.95px;width:14px;height:37.05px;background:#c8ffc8;"></div>
<svg style="left:124.29999999999995px;top:210.95px;" width="16" height="16" viewBox="0 0 16 16"><rect x="1" y="1" width="14" height="14" fill="#fff" stroke="#c6c6c6" stroke-width="1.6"/><path d="M4 8H12M8 4V12" stroke="#c6c6c6" stroke-width="1.6"/></svg>
<div style="left:351.1px;top:198.95px;width:26.0px;height:36.75px;background:#edf7ed;"></div>
<div class="code" style="left:143.1px;top:198.95px">     secondVal);<span class="br"> }</span></div>
<span class="t" style="left:11.200000000000045px;top:245.11px;line-height:22px;color:#a6a6a6;font-family:'Liberation Sans',sans-serif;font-size:17.3px;letter-spacing:0.083px;">17</span>
<div class="code" style="left:143.1px;top:235.70px"><span class="w">    </span></div>
<div style="left:42px;top:272.45px;width:14px;height:37.05px;background:#c8ffc8;"></div>
<span class="t" style="left:11.200000000000045px;top:281.86px;line-height:22px;color:#a6a6a6;font-family:'Liberation Sans',sans-serif;font-size:17.3px;letter-spacing:0.083px;">18</span>
<svg style="left:124.29999999999995px;top:284.45px;" width="16" height="16" viewBox="0 0 16 16"><rect x="1" y="1" width="14" height="14" fill="#fff" stroke="#c6c6c6" stroke-width="1.6"/><path d="M4 8H12M8 4V12" stroke="#c6c6c6" stroke-width="1.6"/></svg>
<div style="left:403.1px;top:272.45px;width:39.0px;height:36.75px;background:#edf7ed;"></div>
<div style="left:715.2px;top:272.45px;width:26.0px;height:36.75px;background:#edf7ed;"></div>
<div class="code" style="left:143.1px;top:272.45px"><span class="w">    </span><span class="k">public</span><span class="w"> </span><span class="tp">T</span><span class="w"> </span>first()<span class="br"> { </span><span class="k">return</span><span class="w"> </span><span class="k">this</span>.<span class="f">firstVal</span>;<span class="br"> }</span></div>
<span class="t" style="left:11.200000000000045px;top:318.61px;line-height:22px;color:#a6a6a6;font-family:'Liberation Sans',sans-serif;font-size:17.3px;letter-spacing:0.083px;">21</span>
<div class="code" style="left:143.1px;top:309.20px"><span class="w">    </span></div>
<div style="left:42px;top:345.95px;width:14px;height:37.05px;background:#c8ffc8;"></div>
<span class="t" style="left:11.200000000000045px;top:355.36px;line-height:22px;color:#a6a6a6;font-family:'Liberation Sans',sans-serif;font-size:17.3px;letter-spacing:0.083px;">22</span>
<svg style="left:124.29999999999995px;top:357.95px;" width="16" height="16" viewBox="0 0 16 16"><rect x="1" y="1" width="14" height="14" fill="#fff" stroke="#c6c6c6" stroke-width="1.6"/><path d="M4 8H12M8 4V12" stroke="#c6c6c6" stroke-width="1.6"/></svg>
<div style="left:416.1px;top:345.95px;width:39.0px;height:36.75px;background:#edf7ed;"></div>
<div style="left:741.2px;top:345.95px;width:26.0px;height:36.75px;background:#edf7ed;"></div>
<div class="code" style="left:143.1px;top:345.95px"><span class="w">    </span><span class="k">public</span><span class="w"> </span><span class="tp">U</span><span class="w"> </span>second()<span class="br"> { </span><span class="k">return</span><span class="w"> </span><span class="k">this</span>.<span class="f">secondVal</span>;<span class="br"> }</span></div>
<span class="t" style="left:11.200000000000045px;top:392.11px;line-height:22px;color:#a6a6a6;font-family:'Liberation Sans',sans-serif;font-size:17.3px;letter-spacing:0.083px;">25</span>
<div class="code" style="left:143.1px;top:382.70px"><span class="w">    </span></div>
<span class="t" style="left:11.200000000000045px;top:428.86px;line-height:22px;color:#a6a6a6;font-family:'Liberation Sans',sans-serif;font-size:17.3px;letter-spacing:0.083px;">26</span>
<div class="code" style="left:143.1px;top:419.45px"><span class="w">    </span><span class="cm">/**</span><span class="w"> </span><span class="cm">Returns</span><span class="w"> </span><span class="cm">true</span><span class="w"> </span><span class="cm">if</span><span class="w"> </span><span class="cm">both</span><span class="w"> </span><span class="cm">ingredients</span><span class="w"> </span><span class="cm">have</span><span class="w"> </span><span class="cm">the</span><span class="w"> </span><span class="cm">same</span><span class="w"> </span></div>
<div class="code" style="left:143.1px;top:456.20px">     <span class="cm">name.</span><span class="w"> </span><span class="cm">*/</span></div>
<span class="t" style="left:11.200000000000045px;top:502.36px;line-height:22px;color:#a6a6a6;font-family:'Liberation Sans',sans-serif;font-size:17.3px;letter-spacing:0.083px;">27</span>
<div class="code" style="left:143.1px;top:492.95px"><span class="w">    </span><span class="an">@Override</span></div>
<span class="t" style="left:11.200000000000045px;top:539.11px;line-height:22px;color:#a6a6a6;font-family:'Liberation Sans',sans-serif;font-size:17.3px;letter-spacing:0.083px;">28</span>
<svg style="left:124.29999999999995px;top:542.8000000000001px;" width="16" height="20" viewBox="0 0 16 20"><path d="M1 1V12.5L8 19L15 12.5V1Z" fill="#fff" stroke="#c6c6c6" stroke-width="1.6"/><path d="M4.5 8H11.5" stroke="#c6c6c6" stroke-width="1.6"/></svg>
<div class="code" style="left:143.1px;top:529.70px"><span class="w">    </span><span class="k">public</span><span class="w"> </span><span class="k">boolean</span><span class="w"> </span>equals(Object<span class="w"> </span>obj)<span class="w"> </span>{</div>
<div style="left:42px;top:566.45px;width:14px;height:37.05px;background:#c8ffc8;"></div>
<span class="t" style="left:11.200000000000045px;top:575.86px;line-height:22px;color:#a6a6a6;font-family:'Liberation Sans',sans-serif;font-size:17.3px;letter-spacing:0.083px;">29</span>
<svg style="left:124.29999999999995px;top:579.5500000000001px;" width="16" height="20" viewBox="0 0 16 20"><path d="M1 1V12.5L8 19L15 12.5V1Z" fill="#fff" stroke="#c6c6c6" stroke-width="1.6"/><path d="M4.5 8H11.5" stroke="#c6c6c6" stroke-width="1.6"/></svg>
<div class="code" style="left:143.1px;top:566.45px"><span class="w">        </span><span class="k">if</span><span class="w"> </span>(obj<span class="w"> </span>==<span class="w"> </span><span class="k">this</span>)<span class="w"> </span>{</div>
<div style="left:42px;top:603.2px;width:14px;height:37.05px;background:#ffc8c8;"></div>
<span class="t" style="left:11.200000000000045px;top:612.61px;line-height:22px;color:#a6a6a6;font-family:'Liberation Sans',sans-serif;font-size:17.3px;letter-spacing:0.083px;">30</span>
<div class="code" style="left:143.1px;top:603.20px"><span class="w">            </span><span class="k">return</span><span class="w"> </span><span class="k">true</span>;</div>
<span class="t" style="left:11.200000000000045px;top:649.36px;line-height:22px;color:#a6a6a6;font-family:'Liberation Sans',sans-serif;font-size:17.3px;letter-spacing:0.083px;">31</span>
<svg style="left:124.29999999999995px;top:648.45px;" width="16" height="20" viewBox="0 0 16 20"><path d="M1 19V7.5L8 1L15 7.5V19Z" fill="#fff" stroke="#c6c6c6" stroke-width="1.6"/><path d="M4.5 11.5H11.5" stroke="#c6c6c6" stroke-width="1.6"/></svg>
<div class="code" style="left:143.1px;top:639.95px"><span class="w">        </span>}</div>
<div style="left:42px;top:676.7px;width:14px;height:37.05px;background:#c8ffc8;"></div>
<span class="t" style="left:11.200000000000045px;top:686.11px;line-height:22px;color:#a6a6a6;font-family:'Liberation Sans',sans-serif;font-size:17.3px;letter-spacing:0.083px;">32</span>
<svg style="left:124.29999999999995px;top:689.8000000000001px;" width="16" height="20" viewBox="0 0 16 20"><path d="M1 1V12.5L8 19L15 12.5V1Z" fill="#fff" stroke="#c6c6c6" stroke-width="1.6"/><path d="M4.5 8H11.5" stroke="#c6c6c6" stroke-width="1.6"/></svg>
<div style="left:494.2px;top:676.7px;width:52.0px;height:36.75px;background:#e4e4ff;"></div>
<div class="code" style="left:143.1px;top:676.70px"><span class="w">        </span><span class="k">if</span><span class="w"> </span>(obj<span class="w"> </span><span class="k">instanceof</span><span class="w"> </span>Pair)<span class="w"> </span>{</div>
<div style="left:42px;top:713.45px;width:14px;height:37.05px;background:#c8ffc8;"></div>
<span class="t" style="left:11.200000000000045px;top:722.86px;line-height:22px;color:#a6a6a6;font-family:'Liberation Sans',sans-serif;font-size:17.3px;letter-spacing:0.083px;">33</span>
<div style="left:299.1px;top:713.45px;width:52.0px;height:36.75px;background:#e4e4ff;"></div>
<div style="left:507.2px;top:713.45px;width:52.0px;height:36.75px;background:#e4e4ff;"></div>
<div class="code" style="left:143.1px;top:713.45px"><span class="w">            </span>Pair&lt;?,<span class="w"> </span>?&gt;<span class="w"> </span>p<span class="w"> </span>=<span class="w"> </span>(Pair&lt;?,<span class="w"> </span>?&gt;)<span class="w"> </span>obj;</div>
<div style="left:42px;top:750.2px;width:14px;height:37.05px;background:#c8ffc8;"></div>
<span class="t" style="left:11.200000000000045px;top:759.61px;line-height:22px;color:#a6a6a6;font-family:'Liberation Sans',sans-serif;font-size:17.3px;letter-spacing:0.083px;">34</span>
<div class="code" style="left:143.1px;top:750.20px"><span class="w">            </span><span class="k">return</span><span class="w"> </span>(p.<span class="f">firstVal</span>.equals(<span class="k">this</span>.<span class="f">firstVal</span>)<span class="w"> </span>&amp;&amp;<span class="w"> </span></div>
<div style="left:42px;top:786.95px;width:14px;height:37.05px;background:#c8ffc8;"></div>
<div class="code" style="left:143.1px;top:786.95px">             p.<span class="f">secondVal</span>.equals(<span class="k">this</span>.<span class="f">secondVal</span>));</div>
<span class="t" style="left:11.200000000000045px;top:833.11px;line-height:22px;color:#a6a6a6;font-family:'Liberation Sans',sans-serif;font-size:17.3px;letter-spacing:0.083px;">35</span>
<svg style="left:124.29999999999995px;top:832.2px;" width="16" height="20" viewBox="0 0 16 20"><path d="M1 19V7.5L8 1L15 7.5V19Z" fill="#fff" stroke="#c6c6c6" stroke-width="1.6"/><path d="M4.5 11.5H11.5" stroke="#c6c6c6" stroke-width="1.6"/></svg>
<div class="code" style="left:143.1px;top:823.70px"><span class="w">        </span>}</div>
<div style="left:42px;top:860.45px;width:14px;height:37.05px;background:#ffc8c8;"></div>
<span class="t" style="left:11.200000000000045px;top:869.86px;line-height:22px;color:#a6a6a6;font-family:'Liberation Sans',sans-serif;font-size:17.3px;letter-spacing:0.083px;">36</span>
<div class="code" style="left:143.1px;top:860.45px"><span class="w">        </span><span class="k">return</span><span class="w"> </span><span class="k">false</span>;</div>
<span class="t" style="left:11.200000000000045px;top:906.61px;line-height:22px;color:#a6a6a6;font-family:'Liberation Sans',sans-serif;font-size:17.3px;letter-spacing:0.083px;">37</span>
<svg style="left:124.29999999999995px;top:905.7px;" width="16" height="20" viewBox="0 0 16 20"><path d="M1 19V7.5L8 1L15 7.5V19Z" fill="#fff" stroke="#c6c6c6" stroke-width="1.6"/><path d="M4.5 11.5H11.5" stroke="#c6c6c6" stroke-width="1.6"/></svg>
<div class="code" style="left:143.1px;top:897.20px"><span class="w">    </span>}</div>
<span class="t" style="left:11.200000000000045px;top:943.36px;line-height:22px;color:#a6a6a6;font-family:'Liberation Sans',sans-serif;font-size:17.3px;letter-spacing:0.083px;">38</span>
<div class="code" style="left:143.1px;top:933.95px">}<span class="w"> </span></div>
<span class="t" style="left:86.5px;top:127.97px;line-height:27px;color:#5c5c5c;font-family:'Liberation Sans',sans-serif;font-size:21px;letter-spacing:-0.945px;transform-origin:0 0;transform:scaleX(0.8733);">@</span>
<span class="t" style="left:86.5px;top:532.22px;line-height:27px;color:#5c5c5c;font-family:'Liberation Sans',sans-serif;font-size:21px;letter-spacing:-0.945px;transform-origin:0 0;transform:scaleX(0.8733);">@</span>
<svg style="left:59px;top:537.7px;" width="22" height="22" viewBox="0 0 22 22"><circle cx="7" cy="11.5" r="6.6" fill="#62b8de"/><circle cx="7" cy="11.5" r="2.6" fill="none" stroke="#36505c" stroke-width="1.6"/><path d="M17.5 21V3M13.8 7L17.5 2.5L21.2 7" fill="none" stroke="#e05555" stroke-width="1.8"/></svg>
</div>
<div style="left:1610px;top:393px;width:15.5px;height:587px;background:#d6d6d6;"></div>
<div style="left:1606px;top:152px;width:18px;height:17px;background:#e9c800;"></div>
<div style="left:1603px;top:221px;width:25px;height:3px;background:#e9c800;"></div>
<div style="left:1603px;top:266.5px;width:25px;height:3.2px;background:#b6a4f3;"></div>
<div style="left:1603px;top:468px;width:25px;height:3.2px;background:#b6a4f3;"></div>
<div style="left:1603px;top:491px;width:25px;height:3.2px;background:#b6a4f3;"></div>
<div style="left:1603px;top:804px;width:25px;height:3.2px;background:#b6a4f3;"></div>
<div style="left:1603px;top:823.5px;width:25px;height:3.2px;background:#b6a4f3;"></div>
<div style="left:1627px;top:102px;width:1.8px;height:1055px;background:#c4c4c4;"></div>
<div style="left:683px;top:1116px;width:944px;height:40px;background:#f0f0f0;"></div>
<div style="left:683px;top:1116px;width:944px;height:1px;background:#dedede;"></div>
<span class="t" style="left:831.7px;top:1124.82px;line-height:27px;color:#5c5c5c;font-family:'Liberation Sans',sans-serif;font-size:21px;letter-spacing:-0.765px;">Pair</span>
<div style="left:38px;top:1156px;width:2485px;height:299px;background:#f2f2f2;"></div>
<div style="left:38px;top:1157px;width:2485px;height:2px;background:#c9c9c9;"></div>
<div style="left:38px;top:1204px;width:2485px;height:2px;background:#c9c9c9;"></div>
<span class="t" style="left:49.4px;top:1169.02px;line-height:27px;color:#000;font-family:'Liberation Sans',sans-serif;font-size:21px;letter-spacing:-0.865px;">Run:</span>
<svg style="left:125px;top:1172px;" width="25.9" height="18.9" viewBox="0 0 24 17.5"><path d="M0.5 17.5V11C0.5 6.5 4 4 8.5 4H12C13.5 3 15.5 3.2 16.8 4.3C18.3 5.6 18.6 7.8 19.8 7.8C21.2 7.8 22 6.3 22 4.6C22 3 21 1.9 19.8 1.9C19.2 1.9 18.7 2.3 18.6 2.8L17.3 2.2C17.7 1 18.8 0.3 20 0.3C22 0.3 23.6 2.2 23.6 4.6C23.6 7.4 22 9.6 19.6 9.6C18.6 9.6 17.8 9.2 17.2 8.6C17.2 11.5 16.4 13.2 15.6 13.8V17.5H12V14.2H10.2V17.5H6.6V14.2H4.3V17.5Z" fill="#c5cace"/><path d="M8.2 6.3C9.4 8.6 12.2 8.8 14 6.6" fill="none" stroke="#f2f2f2" stroke-width="0.9" opacity=".75"/></svg>
<span class="t" style="left:159.7px;top:1169.02px;line-height:27px;color:#000;font-family:'Liberation Sans',sans-serif;font-size:21px;letter-spacing:-0.031px;">Tests in 'tp.test'</span>
<svg style="left:315.8px;top:1176.5px;" width="13" height="13" viewBox="0 0 13 13"><path d="M1 1L12 12M12 1L1 12" stroke="#b0b0b0" stroke-width="1.6" fill="none"/></svg>
<div style="left:103.3px;top:1201px;width:244.7px;height:4.5px;background:#9ca8c1;"></div>
<svg style="left:2443.3px;top:1169.3px;" width="23" height="23" viewBox="0 0 23 23"><path d="M8.6 0.3H14.4L15.3 6H7.7Z" transform="rotate(0 11.5 11.5)" fill="#787878"/><path d="M8.6 0.3H14.4L15.3 6H7.7Z" transform="rotate(60 11.5 11.5)" fill="#787878"/><path d="M8.6 0.3H14.4L15.3 6H7.7Z" transform="rotate(120 11.5 11.5)" fill="#787878"/><path d="M8.6 0.3H14.4L15.3 6H7.7Z" transform="rotate(180 11.5 11.5)" fill="#787878"/><path d="M8.6 0.3H14.4L15.3 6H7.7Z" transform="rotate(240 11.5 11.5)" fill="#787878"/><path d="M8.6 0.3H14.4L15.3 6H7.7Z" transform="rotate(300 11.5 11.5)" fill="#787878"/><circle cx="11.5" cy="11.5" r="6" fill="none" stroke="#787878" stroke-width="4.6"/></svg>
<svg style="left:2490.0px;top:1179.0px;" width="22" height="3" viewBox="0 0 22 3"><rect width="22" height="3" fill="#787878"/></svg>
<div style="left:87.5px;top:1206px;width:1.5px;height:249px;background:#d0d0d0;"></div>
<svg style="left:50.5px;top:1219px;transform:scale(.93);transform-origin:0 0;" width="28" height="26" viewBox="0 0 28 26"><path d="M0 3L10 0L20 3V8H11V22.5C4 19.5 0 15 0 9Z" fill="#6e6e6e"/><path d="M10 3.2V20C6 17.5 3 14 3 9V5.2Z" fill="#f2f2f2" opacity="0"/><path d="M10.5 3.5L17 5.3V8H10.5Z" fill="#f2f2f2"/><path d="M14 9.5L28 17.5L14 25.5Z" fill="#59a869"/></svg>
<svg style="left:50px;top:1262px;" width="28" height="26" viewBox="0 0 28 26"><path d="M1 11L12 17.5L1 24Z" fill="#c4c4c4"/><path d="M12 14A7.2 7.2 0 1 1 19 15L13 23" fill="none" stroke="#c4c4c4" stroke-width="4"/></svg>
<div style="left:46px;top:1304px;width:34px;height:1.5px;background:#d0d0d0;"></div>
<div style="left:54px;top:1325px;width:18px;height:18px;background:#c4c4c4;"></div>
<div style="left:46px;top:1361.5px;width:34px;height:1.5px;background:#d0d0d0;"></div>
<svg style="left:50px;top:1381px;" width="30" height="26" viewBox="0 0 30 26"><path d="M1 10C6 1 19 1 24 10C19 19 6 19 1 10Z" fill="none" stroke="#c4c4c4" stroke-width="2.6"/><circle cx="12.5" cy="10" r="3.6" fill="#c4c4c4"/><path d="M19 21H28L23.5 25.5Z" fill="#c4c4c4"/></svg>
<div style="left:46px;top:1419.5px;width:34px;height:1.5px;background:#d0d0d0;"></div>
<span class="t" style="left:57px;top:1423.22px;line-height:27px;color:#6a6a6a;font-family:'Liberation Sans',sans-serif;font-size:21px;letter-spacing:-0.500px;">››</span>
<svg style="left:103.4px;top:1220.0px;" width="26" height="20" viewBox="0 0 26 20"><path d="M1.5 10.5L9 17.5L24.5 2" fill="none" stroke="#6e6e6e" stroke-width="4.4"/></svg>
<div style="left:141.7px;top:1211.4px;width:38.3px;height:38px;background:#d0d0d0;"></div>
<svg style="left:150px;top:1219px;" width="22" height="22" viewBox="0 0 22 22"><circle cx="11" cy="11" r="9.4" fill="none" stroke="#6e6e6e" stroke-width="2.8"/><path d="M4.5 17.5L17.5 4.5" stroke="#6e6e6e" stroke-width="2.8"/></svg>
<div style="left:189.5px;top:1213px;width:1.5px;height:34px;background:#d0d0d0;"></div>
<svg style="left:207px;top:1219px;" width="24" height="24" viewBox="0 0 24 24"><path d="M5.5 0V19.5M0 13.5L5.5 20L11 13.5" fill="none" stroke="#6e6e6e" stroke-width="3.2"/><text x="13.5" y="10" font-family="Liberation Sans,sans-serif" font-size="14.5" font-weight="700" fill="#6e6e6e">a</text><text x="14" y="22.5" font-family="Liberation Sans,sans-serif" font-size="14.5" font-weight="700" fill="#6e6e6e">z</text></svg>
<svg style="left:251.5px;top:1219px;" width="25" height="24" viewBox="0 0 25 24"><path d="M5.5 0V19.5M0 13.5L5.5 20L11 13.5" fill="none" stroke="#6e6e6e" stroke-width="3.2"/><path d="M12.5 3H25M18 10H25M21 17H25" stroke="#6e6e6e" stroke-width="3.2" fill="none"/></svg>
<div style="left:292px;top:1213px;width:1.5px;height:34px;background:#d0d0d0;"></div>
<svg style="left:310.7px;top:1218.0px;" width="22" height="24" viewBox="0 0 22 24"><rect x="0" y="0" width="22" height="3" fill="#6e6e6e"/><rect x="0" y="21" width="22" height="3" fill="#6e6e6e"/><path d="M5.5 10.5H16.5L11 4.8Z" fill="#6e6e6e"/><path d="M5.5 13.5H16.5L11 19.2Z" fill="#6e6e6e"/></svg>
<svg style="left:356.7px;top:1219.0px;" width="22" height="22" viewBox="0 0 22 22"><rect x="0" y="9.6" width="22" height="2.9" fill="#6e6e6e"/><path d="M5.5 0.5H16.5L11 6.5Z" fill="#6e6e6e"/><path d="M5.5 21.5H16.5L11 15.5Z" fill="#6e6e6e"/></svg>
<div style="left:395.5px;top:1213px;width:1.5px;height:34px;background:#d0d0d0;"></div>
<svg style="left:415.5px;top:1220px;" width="18" height="21" viewBox="0 0 18 21"><path d="M9 21V2.5M1.5 10L9 2.2L16.5 10" fill="none" stroke="#c4c4c4" stroke-width="3"/></svg>
<svg style="left:461.5px;top:1220px;" width="18" height="21" viewBox="0 0 18 21"><path d="M9 0V18.5M1.5 11L9 18.8L16.5 11" fill="none" stroke="#c4c4c4" stroke-width="3"/></svg>
<svg style="left:508px;top:1217.5px;" width="21.6" height="15.8" viewBox="0 0 24 17.5"><path d="M0.5 17.5V11C0.5 6.5 4 4 8.5 4H12C13.5 3 15.5 3.2 16.8 4.3C18.3 5.6 18.6 7.8 19.8 7.8C21.2 7.8 22 6.3 22 4.6C22 3 21 1.9 19.8 1.9C19.2 1.9 18.7 2.3 18.6 2.8L17.3 2.2C17.7 1 18.8 0.3 20 0.3C22 0.3 23.6 2.2 23.6 4.6C23.6 7.4 22 9.6 19.6 9.6C18.6 9.6 17.8 9.2 17.2 8.6C17.2 11.5 16.4 13.2 15.6 13.8V17.5H12V14.2H10.2V17.5H6.6V14.2H4.3V17.5Z" fill="#6e6e6e"/><path d="M8.2 6.3C9.4 8.6 12.2 8.8 14 6.6" fill="none" stroke="#f2f2f2" stroke-width="0.9" opacity=".75"/></svg>
<svg style="left:503px;top:1229px;" width="14" height="13" viewBox="0 0 14 13"><path d="M1 12L11 2.5M4.5 1.5H12V9" fill="none" stroke="#6e6e6e" stroke-width="2.6"/></svg>
<span class="t" style="left:554px;top:1215.72px;line-height:27px;color:#6a6a6a;font-family:'Liberation Sans',sans-serif;font-size:21px;">››</span>
<svg style="left:582.2px;top:1220.0px;" width="26" height="20" viewBox="0 0 26 20"><path d="M1.5 10.5L9 17.5L24.5 2" fill="none" stroke="#59a869" stroke-width="4.6"/></svg>
<span class="t" style="left:612.8px;top:1216.22px;line-height:27px;color:#000;font-family:'Liberation Sans',sans-serif;font-size:21px;letter-spacing:-0.475px;">Tests passed: 60</span>
<span class="t" style="left:768.9px;top:1216.22px;line-height:27px;color:#999;font-family:'Liberation Sans',sans-serif;font-size:21px;letter-spacing:-0.315px;">of 60 tests – 831 ms</span>
<div style="left:89.5px;top:1255px;width:485px;height:199px;background:#fff;border:1.5px solid #cdcdcd;box-sizing:border-box;border-bottom:0"></div>
<div style="left:91px;top:1256px;width:482.5px;height:34.5px;background:#d4d4d4;"></div>
<svg style="left:100.0px;top:1267.5px;" width="18" height="12" viewBox="0 0 18 12"><path d="M2.2 2L9 9.2L15.8 2" fill="none" stroke="#8a8a8a" stroke-width="3.4" stroke-linecap="round" stroke-linejoin="miter"/></svg>
<svg style="left:139px;top:1264px;transform:scale(.82);transform-origin:0 0;" width="26" height="20" viewBox="0 0 26 20"><path d="M1.5 10.5L9 17.5L24.5 2" fill="none" stroke="#62b55a" stroke-width="4.8"/></svg>
<span class="t" style="left:166.7px;top:1261.72px;line-height:27px;color:#000;font-family:'Liberation Sans',sans-serif;font-size:21px;letter-spacing:-0.456px;">Test Results</span>
<span class="t" style="left:508.9px;top:1263.76px;line-height:23px;color:#000;font-family:'Liberation Sans',sans-serif;font-size:18px;letter-spacing:-0.205px;">831 ms</span>
<div style="left:574.5px;top:1250px;width:1.5px;height:205px;background:#cdcdcd;"></div>
<div style="left:580px;top:1255px;width:1894px;height:199px;background:#fff;border:1.5px solid #cdcdcd;box-sizing:border-box;border-bottom:0"></div>
<div class="code" style="left:601.5px;top:1257.4px;color:#00007f">Testing<span class="w"> </span>started<span class="w"> </span>at<span class="w"> </span>12:07<span class="w"> </span>PM<span class="w"> </span>...</div>
<div class="code" style="left:601.5px;top:1295.7px;color:#1a1a1a">Gradle<span class="w"> </span>Daemon<span class="w"> </span>started<span class="w"> </span>in<span class="w"> </span>2<span class="w"> </span>s<span class="w"> </span>165<span class="w"> </span>ms</div>
<div class="code" style="left:601.5px;top:1334.0px;color:#1a1a1a">&gt;<span class="w"> </span>Task<span class="w"> </span>:cleanTest<span class="w"> </span>UP-TO-DATE</div>
<div class="code" style="left:601.5px;top:1372.3px;color:#1a1a1a">&gt;<span class="w"> </span>Task<span class="w"> </span>:compileJava</div>
<div class="code" style="left:601.5px;top:1410.6px;color:#1a1a1a">&gt;<span class="w"> </span>Task<span class="w"> </span>:processResources<span class="w"> </span>NO-SOURCE</div>
<div style="left:2455.5px;top:1256.5px;width:17px;height:47px;background:#e4e4e4;"></div>
<svg style="left:2485px;top:1270px;" width="24" height="24" viewBox="0 0 24 24"><rect x="0" y="18.5" width="21" height="4.6" fill="#db4b4b"/><path d="M8 16L13 10L17 14Z" fill="#db4b4b"/><path d="M14.5 9L23 1.5L25.5 4L17.5 12.5Z" fill="#b9bdc1"/></svg>
<svg style="left:2485.5px;top:1316px;" width="22" height="22" viewBox="0 0 22 22"><path d="M6 0V19M0 13.5L6 19.8L12 13.5" fill="none" stroke="#6e6e6e" stroke-width="2.8"/><rect x="16" y="1" width="5" height="5" fill="#6e6e6e"/><rect x="16" y="9" width="5" height="5" fill="#6e6e6e"/><rect x="16" y="17" width="5" height="5" fill="#6e6e6e"/></svg>
<svg style="left:2488.5px;top:1361px;" width="18" height="22" viewBox="0 0 18 22"><path d="M9 22V3M1.5 10.5L9 2.5L16.5 10.5" fill="none" stroke="#6e6e6e" stroke-width="2.8"/></svg>
<span class="t" style="left:2492.5px;top:1423.22px;line-height:27px;color:#6a6a6a;font-family:'Liberation Sans',sans-serif;font-size:21px;letter-spacing:-0.250px;">››</span>
<div style="left:0px;top:102px;width:37px;height:1353px;background:#f2f2f2;"></div>
<div style="left:37px;top:102px;width:1px;height:1353px;background:#d6d6d6;"></div>
<div style="left:0px;top:102px;width:37px;height:142px;background:#bdbdbd;"></div>
<span class="t" style="left:6.78px;top:196px;line-height:27px;color:#000;transform-origin:0 0;transform:rotate(-90deg);font-family:'Liberation Sans',sans-serif;font-size:21px;letter-spacing:-0.945px;"><u>1</u>: Project</span>
<svg style="left:10px;top:206px;" width="20" height="16" viewBox="0 0 20 16"><path d="M0 0H20V16H0Z" fill="none"/><path d="M0 0V16H20V3.5H10L7.5 0Z" fill="#5a5a5a" transform="rotate(-90 10 8) translate(-2 -2)"/></svg>
<span class="t" style="left:6.78px;top:1238px;line-height:27px;color:#000;transform-origin:0 0;transform:rotate(-90deg);font-family:'Liberation Sans',sans-serif;font-size:21px;letter-spacing:-0.945px;"><u>2</u>: Favorites</span>
<svg style="left:9.5px;top:1246px;" width="21" height="21" viewBox="0 0 21 21"><path d="M10.5 0L13.6 7.2L21 7.9L15.4 12.9L17 20.5L10.5 16.5L4 20.5L5.6 12.9L0 7.9L7.4 7.2Z" fill="#5a5a5a"/></svg>
<span class="t" style="left:6.78px;top:1405px;line-height:27px;color:#000;transform-origin:0 0;transform:rotate(-90deg);font-family:'Liberation Sans',sans-serif;font-size:21px;letter-spacing:-0.945px;"><u>7</u>: Structure</span>
<svg style="left:12px;top:1416px;" width="17" height="16" viewBox="0 0 17 16"><rect x="9" y="0" width="7" height="7" fill="#6e6e6e"/><rect x="0" y="9" width="7" height="7" fill="#6e6e6e"/><rect x="9" y="9" width="7" height="7" fill="#6e6e6e"/></svg>
<div style="left:2524px;top:102px;width:36px;height:1353px;background:#f2f2f2;"></div>
<div style="left:2523px;top:102px;width:1.5px;height:1353px;background:#cdcdcd;"></div>
<svg style="left:2533px;top:119px;" width="20" height="22" viewBox="0 0 20 22"><ellipse cx="10" cy="4" rx="9.5" ry="4" fill="#6e6e6e"/><path d="M0.5 7C3 10.5 17 10.5 19.5 7V10.5C17 14 3 14 0.5 10.5Z M0.5 12.5C3 16 17 16 19.5 12.5V16C17 19.5 3 19.5 0.5 16Z" fill="#6e6e6e"/><path d="M0.5 18C3 21.5 17 21.5 19.5 18V19C17 23 3 23 0.5 19Z" fill="#6e6e6e"/></svg>
<span class="t" style="left:2553.72px;top:150px;line-height:27px;color:#000;transform-origin:0 0;transform:rotate(90deg);font-family:'Liberation Sans',sans-serif;font-size:21px;letter-spacing:-0.945px;">Database</span>
<svg style="left:2530px;top:265px;" width="22" height="22" viewBox="0 0 22 22"><path d="M2 14L6 4L10 12L14 3L19 12" fill="none" stroke="#f0a73a" stroke-width="3"/><path d="M12 2L20 12L13 20" fill="none" stroke="#c14a8c" stroke-width="2"/><path d="M2 15H14V20H2Z" fill="#f6c14c"/></svg>
<span class="t" style="left:2553.72px;top:295px;line-height:27px;color:#000;transform-origin:0 0;transform:rotate(90deg);font-family:'Liberation Sans',sans-serif;font-size:21px;letter-spacing:-0.945px;">PlantUML</span>
<span class="t" style="left:2553.72px;top:413.7px;line-height:27px;color:#000;transform-origin:0 0;transform:rotate(90deg);font-family:'Liberation Sans',sans-serif;font-size:21px;letter-spacing:-0.945px;">JSON Viewer</span>
<svg style="left:2532px;top:558.4px;" width="23.3" height="17.0" viewBox="0 0 24 17.5"><path d="M0.5 17.5V11C0.5 6.5 4 4 8.5 4H12C13.5 3 15.5 3.2 16.8 4.3C18.3 5.6 18.6 7.8 19.8 7.8C21.2 7.8 22 6.3 22 4.6C22 3 21 1.9 19.8 1.9C19.2 1.9 18.7 2.3 18.6 2.8L17.3 2.2C17.7 1 18.8 0.3 20 0.3C22 0.3 23.6 2.2 23.6 4.6C23.6 7.4 22 9.6 19.6 9.6C18.6 9.6 17.8 9.2 17.2 8.6C17.2 11.5 16.4 13.2 15.6 13.8V17.5H12V14.2H10.2V17.5H6.6V14.2H4.3V17.5Z" fill="#6e6e6e"/><path d="M8.2 6.3C9.4 8.6 12.2 8.8 14 6.6" fill="none" stroke="#f2f2f2" stroke-width="0.9" opacity=".75"/></svg>
<span class="t" style="left:2553.72px;top:586px;line-height:27px;color:#000;transform-origin:0 0;transform:rotate(90deg);font-family:'Liberation Sans',sans-serif;font-size:21px;letter-spacing:-0.945px;">Gradle</span>
<svg style="left:2533.7px;top:678.5px;" width="19.5" height="16" viewBox="0 0 19.5 16"><path d="M0 1.7H3.2M5.2 1.7H14.3M16.3 1.7H19.5M0 8H3.2M5.2 8H14.3M16.3 8H19.5M0 14.3H3.2M5.2 14.3H14.3M16.3 14.3H19.5" stroke="#6e6e6e" stroke-width="3.4" fill="none"/></svg>
<span class="t" style="left:2553.72px;top:705px;line-height:27px;color:#000;transform-origin:0 0;transform:rotate(90deg);font-family:'Liberation Sans',sans-serif;font-size:21px;letter-spacing:-0.945px;">SciView</span>
<div style="left:2524.5px;top:1307px;width:35.5px;height:148px;background:#bdbdbd;"></div>
<svg style="left:2532px;top:1326.5px;" width="18" height="21" viewBox="0 0 18 21"><path d="M9 0L18 2.8V9C18 15 14 19 9 21C4 19 0 15 0 9V2.8Z" fill="#6e6e6e"/><path d="M9 2.4L15.8 4.5V9C15.8 13.8 13 17 9 18.7Z" fill="#bdbdbd"/></svg>
<span class="t" style="left:2553.72px;top:1357.3px;line-height:27px;color:#000;transform-origin:0 0;transform:rotate(90deg);font-family:'Liberation Sans',sans-serif;font-size:21px;letter-spacing:-0.945px;">Coverage</span>
<div style="left:0px;top:1455px;width:2560px;height:38px;background:#f2f2f2;"></div>
<div style="left:0px;top:1454px;width:2560px;height:1.5px;background:#cdcdcd;"></div>
<svg style="left:57.5px;top:1467px;" width="19" height="18" viewBox="0 0 19 18"><rect width="19" height="18" fill="#6e6e6e"/><path d="M3.5 4.5L8 8.5L3.5 12.5M9.5 13.5H15.5" fill="none" stroke="#f2f2f2" stroke-width="1.7"/></svg>
<span class="t" style="left:86.7px;top:1463.62px;line-height:27px;color:#000;font-family:'Liberation Sans',sans-serif;font-size:21px;letter-spacing:-0.857px;">Terminal</span>
<svg style="left:194px;top:1465.5px;" width="21" height="21" viewBox="0 0 21 21"><circle cx="10.5" cy="10.5" r="10" fill="#dfe7f2"/><path d="M10.5 11L1.2 8A10 10 0 0 1 13.5 1Z" fill="#3a78d8"/><path d="M10.5 11L13.5 1A10 10 0 0 1 19 16Z" fill="#e03c3c"/><path d="M10.5 11L17 18.2A10 10 0 0 1 4.5 18.5Z" fill="#2f9c47"/><path d="M10.5 11L4.5 18.5A10 10 0 0 1 1 9Z" fill="#c94a4a"/><circle cx="8" cy="6" r="2.2" fill="#fff" opacity=".55"/></svg>
<span class="t" style="left:222.2px;top:1463.62px;line-height:27px;color:#000;font-family:'Liberation Sans',sans-serif;font-size:21px;letter-spacing:-0.945px;transform-origin:0 0;transform:scaleX(0.9827);">Statistic</span>
<div style="left:304.7px;top:1456px;width:114.7px;height:37px;background:#bdbdbd;"></div>
<svg style="left:324.4px;top:1467.5px;" width="15" height="18" viewBox="0 0 15 18"><path d="M0 0L15 9L0 18Z" fill="#6e6e6e"/></svg>
<span class="t" style="left:352px;top:1463.62px;line-height:27px;color:#000;font-family:'Liberation Sans',sans-serif;font-size:21px;letter-spacing:-0.945px;transform-origin:0 0;transform:scaleX(0.9125);"><u>4</u>: Run</span>
<svg style="left:442.5px;top:1468.5px;" width="18" height="15" viewBox="0 0 18 15"><path d="M0 1.5H3M5.5 1.5H18M0 7.5H3M5.5 7.5H18M0 13.5H3M5.5 13.5H18" stroke="#6e6e6e" stroke-width="2.8" fill="none"/></svg>
<span class="t" style="left:469.4px;top:1463.62px;line-height:27px;color:#000;font-family:'Liberation Sans',sans-serif;font-size:21px;letter-spacing:-0.945px;transform-origin:0 0;transform:scaleX(0.8989);"><u>6</u>: TODO</span>
<svg style="left:2394px;top:1465.5px;" width="23" height="23" viewBox="0 0 23 23"><path d="M11.5 0A11.5 11.5 0 1 0 11.5 23H23V11.5A11.5 11.5 0 0 0 11.5 0Z" fill="#59a869"/><text x="11.5" y="17" font-family="Liberation Sans,sans-serif" font-size="15" font-weight="700" fill="#fff" text-anchor="middle">1</text></svg>
<span class="t" style="left:2425.1px;top:1463.62px;line-height:27px;color:#000;font-family:'Liberation Sans',sans-serif;font-size:21px;letter-spacing:-0.945px;transform-origin:0 0;transform:scaleX(0.9341);">Event Log</span>
<div class="red" style="left:210.5px;top:219.5px;width:452.5px;height:537.5px;"></div>
<div class="red" style="left:682px;top:126.5px;width:176px;height:962.5px;"></div>
<div class="red" style="left:1617px;top:90px;width:928px;height:301.2px;"></div>
</body></html>
